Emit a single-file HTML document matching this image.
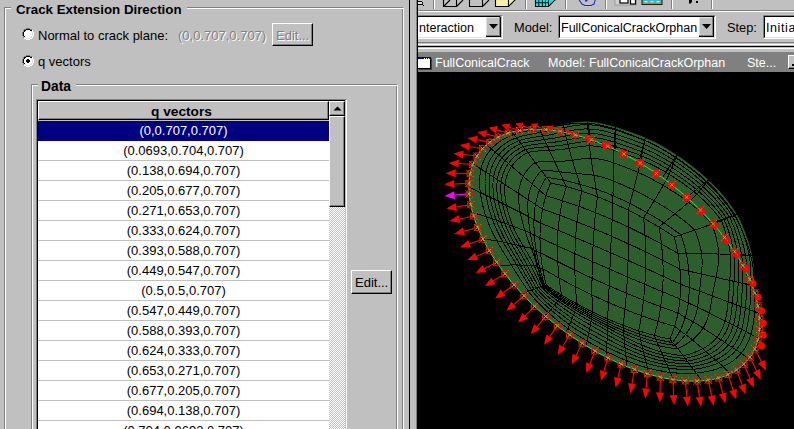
<!DOCTYPE html>
<html><head><meta charset="utf-8">
<style>
*{margin:0;padding:0;box-sizing:border-box}
html,body{width:794px;height:429px;overflow:hidden;background:#c0c0c0;font-family:"Liberation Sans",sans-serif;color:#000}
.a{position:absolute}
.t13{font-size:13px;line-height:15px;white-space:nowrap}
.t12{font-size:12.5px;line-height:15px;white-space:nowrap}
.b{font-weight:bold}
.dis{color:#808080;text-shadow:1px 1px 0 #fff}
.btn{background:#c0c0c0;border-top:1px solid #fff;border-left:1px solid #fff;border-right:1px solid #000;border-bottom:1px solid #000;box-shadow:inset -1px -1px 0 #808080}
.radio{width:12px;height:12px}
.row{position:absolute;left:38px;width:291px;height:20px;background:#fff;border-bottom:1px solid #c0c0c0;text-align:center;font-size:13px;line-height:19px}
</style></head><body>
<!-- LEFT PANEL -->
<div class="a" style="left:4px;top:7px;width:399px;height:500px;border:1px solid #808080"></div>
<div class="a" style="left:5px;top:8px;width:399px;height:500px;border:1px solid #fff"></div>
<div class="a b" style="left:11px;top:2px;padding:0 5px 0 5px;background:#c0c0c0;font-size:13.3px;line-height:15px;white-space:nowrap">Crack Extension Direction</div>

<svg class="a" style="left:22px;top:28px" width="12" height="12" shape-rendering="crispEdges"><rect x="4" y="0" width="1" height="1" fill="#808080"/><rect x="5" y="0" width="1" height="1" fill="#808080"/><rect x="6" y="0" width="1" height="1" fill="#808080"/><rect x="7" y="0" width="1" height="1" fill="#808080"/><rect x="2" y="1" width="1" height="1" fill="#808080"/><rect x="3" y="1" width="1" height="1" fill="#808080"/><rect x="4" y="1" width="1" height="1" fill="#000"/><rect x="5" y="1" width="1" height="1" fill="#000"/><rect x="6" y="1" width="1" height="1" fill="#000"/><rect x="7" y="1" width="1" height="1" fill="#000"/><rect x="8" y="1" width="1" height="1" fill="#808080"/><rect x="9" y="1" width="1" height="1" fill="#808080"/><rect x="1" y="2" width="1" height="1" fill="#808080"/><rect x="2" y="2" width="1" height="1" fill="#000"/><rect x="3" y="2" width="1" height="1" fill="#000"/><rect x="4" y="2" width="1" height="1" fill="#fff"/><rect x="5" y="2" width="1" height="1" fill="#fff"/><rect x="6" y="2" width="1" height="1" fill="#fff"/><rect x="7" y="2" width="1" height="1" fill="#fff"/><rect x="8" y="2" width="1" height="1" fill="#000"/><rect x="9" y="2" width="1" height="1" fill="#000"/><rect x="10" y="2" width="1" height="1" fill="#fff"/><rect x="1" y="3" width="1" height="1" fill="#808080"/><rect x="2" y="3" width="1" height="1" fill="#000"/><rect x="3" y="3" width="1" height="1" fill="#fff"/><rect x="4" y="3" width="1" height="1" fill="#fff"/><rect x="5" y="3" width="1" height="1" fill="#fff"/><rect x="6" y="3" width="1" height="1" fill="#fff"/><rect x="7" y="3" width="1" height="1" fill="#fff"/><rect x="8" y="3" width="1" height="1" fill="#fff"/><rect x="9" y="3" width="1" height="1" fill="#dfdfdf"/><rect x="10" y="3" width="1" height="1" fill="#fff"/><rect x="0" y="4" width="1" height="1" fill="#808080"/><rect x="1" y="4" width="1" height="1" fill="#000"/><rect x="2" y="4" width="1" height="1" fill="#fff"/><rect x="3" y="4" width="1" height="1" fill="#fff"/><rect x="4" y="4" width="1" height="1" fill="#fff"/><rect x="5" y="4" width="1" height="1" fill="#fff"/><rect x="6" y="4" width="1" height="1" fill="#fff"/><rect x="7" y="4" width="1" height="1" fill="#fff"/><rect x="8" y="4" width="1" height="1" fill="#fff"/><rect x="9" y="4" width="1" height="1" fill="#fff"/><rect x="10" y="4" width="1" height="1" fill="#dfdfdf"/><rect x="11" y="4" width="1" height="1" fill="#fff"/><rect x="0" y="5" width="1" height="1" fill="#808080"/><rect x="1" y="5" width="1" height="1" fill="#000"/><rect x="2" y="5" width="1" height="1" fill="#fff"/><rect x="3" y="5" width="1" height="1" fill="#fff"/><rect x="4" y="5" width="1" height="1" fill="#fff"/><rect x="5" y="5" width="1" height="1" fill="#fff"/><rect x="6" y="5" width="1" height="1" fill="#fff"/><rect x="7" y="5" width="1" height="1" fill="#fff"/><rect x="8" y="5" width="1" height="1" fill="#fff"/><rect x="9" y="5" width="1" height="1" fill="#fff"/><rect x="10" y="5" width="1" height="1" fill="#dfdfdf"/><rect x="11" y="5" width="1" height="1" fill="#fff"/><rect x="0" y="6" width="1" height="1" fill="#808080"/><rect x="1" y="6" width="1" height="1" fill="#000"/><rect x="2" y="6" width="1" height="1" fill="#fff"/><rect x="3" y="6" width="1" height="1" fill="#fff"/><rect x="4" y="6" width="1" height="1" fill="#fff"/><rect x="5" y="6" width="1" height="1" fill="#fff"/><rect x="6" y="6" width="1" height="1" fill="#fff"/><rect x="7" y="6" width="1" height="1" fill="#fff"/><rect x="8" y="6" width="1" height="1" fill="#fff"/><rect x="9" y="6" width="1" height="1" fill="#fff"/><rect x="10" y="6" width="1" height="1" fill="#dfdfdf"/><rect x="11" y="6" width="1" height="1" fill="#fff"/><rect x="0" y="7" width="1" height="1" fill="#808080"/><rect x="1" y="7" width="1" height="1" fill="#000"/><rect x="2" y="7" width="1" height="1" fill="#fff"/><rect x="3" y="7" width="1" height="1" fill="#fff"/><rect x="4" y="7" width="1" height="1" fill="#fff"/><rect x="5" y="7" width="1" height="1" fill="#fff"/><rect x="6" y="7" width="1" height="1" fill="#fff"/><rect x="7" y="7" width="1" height="1" fill="#fff"/><rect x="8" y="7" width="1" height="1" fill="#fff"/><rect x="9" y="7" width="1" height="1" fill="#fff"/><rect x="10" y="7" width="1" height="1" fill="#dfdfdf"/><rect x="11" y="7" width="1" height="1" fill="#fff"/><rect x="1" y="8" width="1" height="1" fill="#808080"/><rect x="2" y="8" width="1" height="1" fill="#000"/><rect x="3" y="8" width="1" height="1" fill="#fff"/><rect x="4" y="8" width="1" height="1" fill="#fff"/><rect x="5" y="8" width="1" height="1" fill="#fff"/><rect x="6" y="8" width="1" height="1" fill="#fff"/><rect x="7" y="8" width="1" height="1" fill="#fff"/><rect x="8" y="8" width="1" height="1" fill="#fff"/><rect x="9" y="8" width="1" height="1" fill="#dfdfdf"/><rect x="10" y="8" width="1" height="1" fill="#fff"/><rect x="1" y="9" width="1" height="1" fill="#808080"/><rect x="2" y="9" width="1" height="1" fill="#dfdfdf"/><rect x="3" y="9" width="1" height="1" fill="#dfdfdf"/><rect x="4" y="9" width="1" height="1" fill="#fff"/><rect x="5" y="9" width="1" height="1" fill="#fff"/><rect x="6" y="9" width="1" height="1" fill="#fff"/><rect x="7" y="9" width="1" height="1" fill="#fff"/><rect x="8" y="9" width="1" height="1" fill="#dfdfdf"/><rect x="9" y="9" width="1" height="1" fill="#dfdfdf"/><rect x="10" y="9" width="1" height="1" fill="#fff"/><rect x="2" y="10" width="1" height="1" fill="#fff"/><rect x="3" y="10" width="1" height="1" fill="#fff"/><rect x="4" y="10" width="1" height="1" fill="#dfdfdf"/><rect x="5" y="10" width="1" height="1" fill="#dfdfdf"/><rect x="6" y="10" width="1" height="1" fill="#dfdfdf"/><rect x="7" y="10" width="1" height="1" fill="#dfdfdf"/><rect x="8" y="10" width="1" height="1" fill="#fff"/><rect x="9" y="10" width="1" height="1" fill="#fff"/><rect x="4" y="11" width="1" height="1" fill="#fff"/><rect x="5" y="11" width="1" height="1" fill="#fff"/><rect x="6" y="11" width="1" height="1" fill="#fff"/><rect x="7" y="11" width="1" height="1" fill="#fff"/></svg>
<div class="a t13" style="left:38px;top:28px">Normal to crack plane:</div>
<div class="a t13 dis" style="left:178px;top:28px">(0,0.707,0.707)</div>
<div class="a btn" style="left:272px;top:23px;width:41px;height:23px"></div>
<div class="a t13 dis" style="left:276px;top:28px">Edit...</div>

<svg class="a" style="left:22px;top:55px" width="12" height="12" shape-rendering="crispEdges"><rect x="4" y="0" width="1" height="1" fill="#808080"/><rect x="5" y="0" width="1" height="1" fill="#808080"/><rect x="6" y="0" width="1" height="1" fill="#808080"/><rect x="7" y="0" width="1" height="1" fill="#808080"/><rect x="2" y="1" width="1" height="1" fill="#808080"/><rect x="3" y="1" width="1" height="1" fill="#808080"/><rect x="4" y="1" width="1" height="1" fill="#000"/><rect x="5" y="1" width="1" height="1" fill="#000"/><rect x="6" y="1" width="1" height="1" fill="#000"/><rect x="7" y="1" width="1" height="1" fill="#000"/><rect x="8" y="1" width="1" height="1" fill="#808080"/><rect x="9" y="1" width="1" height="1" fill="#808080"/><rect x="1" y="2" width="1" height="1" fill="#808080"/><rect x="2" y="2" width="1" height="1" fill="#000"/><rect x="3" y="2" width="1" height="1" fill="#000"/><rect x="4" y="2" width="1" height="1" fill="#fff"/><rect x="5" y="2" width="1" height="1" fill="#fff"/><rect x="6" y="2" width="1" height="1" fill="#fff"/><rect x="7" y="2" width="1" height="1" fill="#fff"/><rect x="8" y="2" width="1" height="1" fill="#000"/><rect x="9" y="2" width="1" height="1" fill="#000"/><rect x="10" y="2" width="1" height="1" fill="#fff"/><rect x="1" y="3" width="1" height="1" fill="#808080"/><rect x="2" y="3" width="1" height="1" fill="#000"/><rect x="3" y="3" width="1" height="1" fill="#fff"/><rect x="4" y="3" width="1" height="1" fill="#fff"/><rect x="5" y="3" width="1" height="1" fill="#fff"/><rect x="6" y="3" width="1" height="1" fill="#fff"/><rect x="7" y="3" width="1" height="1" fill="#fff"/><rect x="8" y="3" width="1" height="1" fill="#fff"/><rect x="9" y="3" width="1" height="1" fill="#dfdfdf"/><rect x="10" y="3" width="1" height="1" fill="#fff"/><rect x="0" y="4" width="1" height="1" fill="#808080"/><rect x="1" y="4" width="1" height="1" fill="#000"/><rect x="2" y="4" width="1" height="1" fill="#fff"/><rect x="3" y="4" width="1" height="1" fill="#fff"/><rect x="4" y="4" width="1" height="1" fill="#fff"/><rect x="5" y="4" width="1" height="1" fill="#fff"/><rect x="6" y="4" width="1" height="1" fill="#fff"/><rect x="7" y="4" width="1" height="1" fill="#fff"/><rect x="8" y="4" width="1" height="1" fill="#fff"/><rect x="9" y="4" width="1" height="1" fill="#fff"/><rect x="10" y="4" width="1" height="1" fill="#dfdfdf"/><rect x="11" y="4" width="1" height="1" fill="#fff"/><rect x="0" y="5" width="1" height="1" fill="#808080"/><rect x="1" y="5" width="1" height="1" fill="#000"/><rect x="2" y="5" width="1" height="1" fill="#fff"/><rect x="3" y="5" width="1" height="1" fill="#fff"/><rect x="4" y="5" width="1" height="1" fill="#fff"/><rect x="5" y="5" width="1" height="1" fill="#fff"/><rect x="6" y="5" width="1" height="1" fill="#fff"/><rect x="7" y="5" width="1" height="1" fill="#fff"/><rect x="8" y="5" width="1" height="1" fill="#fff"/><rect x="9" y="5" width="1" height="1" fill="#fff"/><rect x="10" y="5" width="1" height="1" fill="#dfdfdf"/><rect x="11" y="5" width="1" height="1" fill="#fff"/><rect x="0" y="6" width="1" height="1" fill="#808080"/><rect x="1" y="6" width="1" height="1" fill="#000"/><rect x="2" y="6" width="1" height="1" fill="#fff"/><rect x="3" y="6" width="1" height="1" fill="#fff"/><rect x="4" y="6" width="1" height="1" fill="#fff"/><rect x="5" y="6" width="1" height="1" fill="#fff"/><rect x="6" y="6" width="1" height="1" fill="#fff"/><rect x="7" y="6" width="1" height="1" fill="#fff"/><rect x="8" y="6" width="1" height="1" fill="#fff"/><rect x="9" y="6" width="1" height="1" fill="#fff"/><rect x="10" y="6" width="1" height="1" fill="#dfdfdf"/><rect x="11" y="6" width="1" height="1" fill="#fff"/><rect x="0" y="7" width="1" height="1" fill="#808080"/><rect x="1" y="7" width="1" height="1" fill="#000"/><rect x="2" y="7" width="1" height="1" fill="#fff"/><rect x="3" y="7" width="1" height="1" fill="#fff"/><rect x="4" y="7" width="1" height="1" fill="#fff"/><rect x="5" y="7" width="1" height="1" fill="#fff"/><rect x="6" y="7" width="1" height="1" fill="#fff"/><rect x="7" y="7" width="1" height="1" fill="#fff"/><rect x="8" y="7" width="1" height="1" fill="#fff"/><rect x="9" y="7" width="1" height="1" fill="#fff"/><rect x="10" y="7" width="1" height="1" fill="#dfdfdf"/><rect x="11" y="7" width="1" height="1" fill="#fff"/><rect x="1" y="8" width="1" height="1" fill="#808080"/><rect x="2" y="8" width="1" height="1" fill="#000"/><rect x="3" y="8" width="1" height="1" fill="#fff"/><rect x="4" y="8" width="1" height="1" fill="#fff"/><rect x="5" y="8" width="1" height="1" fill="#fff"/><rect x="6" y="8" width="1" height="1" fill="#fff"/><rect x="7" y="8" width="1" height="1" fill="#fff"/><rect x="8" y="8" width="1" height="1" fill="#fff"/><rect x="9" y="8" width="1" height="1" fill="#dfdfdf"/><rect x="10" y="8" width="1" height="1" fill="#fff"/><rect x="1" y="9" width="1" height="1" fill="#808080"/><rect x="2" y="9" width="1" height="1" fill="#dfdfdf"/><rect x="3" y="9" width="1" height="1" fill="#dfdfdf"/><rect x="4" y="9" width="1" height="1" fill="#fff"/><rect x="5" y="9" width="1" height="1" fill="#fff"/><rect x="6" y="9" width="1" height="1" fill="#fff"/><rect x="7" y="9" width="1" height="1" fill="#fff"/><rect x="8" y="9" width="1" height="1" fill="#dfdfdf"/><rect x="9" y="9" width="1" height="1" fill="#dfdfdf"/><rect x="10" y="9" width="1" height="1" fill="#fff"/><rect x="2" y="10" width="1" height="1" fill="#fff"/><rect x="3" y="10" width="1" height="1" fill="#fff"/><rect x="4" y="10" width="1" height="1" fill="#dfdfdf"/><rect x="5" y="10" width="1" height="1" fill="#dfdfdf"/><rect x="6" y="10" width="1" height="1" fill="#dfdfdf"/><rect x="7" y="10" width="1" height="1" fill="#dfdfdf"/><rect x="8" y="10" width="1" height="1" fill="#fff"/><rect x="9" y="10" width="1" height="1" fill="#fff"/><rect x="4" y="11" width="1" height="1" fill="#fff"/><rect x="5" y="11" width="1" height="1" fill="#fff"/><rect x="6" y="11" width="1" height="1" fill="#fff"/><rect x="7" y="11" width="1" height="1" fill="#fff"/><rect x="5" y="4" width="1" height="1" fill="#000"/><rect x="6" y="4" width="1" height="1" fill="#000"/><rect x="4" y="5" width="1" height="1" fill="#000"/><rect x="5" y="5" width="1" height="1" fill="#000"/><rect x="6" y="5" width="1" height="1" fill="#000"/><rect x="7" y="5" width="1" height="1" fill="#000"/><rect x="4" y="6" width="1" height="1" fill="#000"/><rect x="5" y="6" width="1" height="1" fill="#000"/><rect x="6" y="6" width="1" height="1" fill="#000"/><rect x="7" y="6" width="1" height="1" fill="#000"/><rect x="5" y="7" width="1" height="1" fill="#000"/><rect x="6" y="7" width="1" height="1" fill="#000"/></svg>
<div class="a t13" style="left:38px;top:54px">q vectors</div>

<!-- Data group -->
<div class="a" style="left:31px;top:84px;width:366px;height:500px;border:1px solid #808080"></div>
<div class="a" style="left:32px;top:85px;width:366px;height:500px;border:1px solid #fff"></div>
<div class="a b" style="left:38px;top:79px;padding:0 5px 0 3px;background:#c0c0c0;font-size:13.8px;line-height:15px;white-space:nowrap">Data</div>

<!-- table -->
<div class="a" style="left:36px;top:99px;width:311px;height:400px;border-top:1px solid #808080;border-left:1px solid #808080;border-right:1px solid #fff"></div>
<div class="a" style="left:37px;top:100px;width:308px;height:400px;border-top:1px solid #000;border-left:1px solid #000;border-right:1px solid #000;background:#c0c0c0"></div>
<!-- header -->
<div class="a btn" style="left:38px;top:101px;width:291px;height:19px;text-align:center"></div>
<div class="a b" style="left:36px;top:104px;width:291px;text-align:center;font-size:13.7px;line-height:15px;white-space:nowrap">q vectors</div>

<!-- rows -->
<div class="row" style="top:121px;background:#000080;color:#fff;border-bottom:0">(0,0.707,0.707)</div>
<div class="row" style="top:141px">(0.0693,0.704,0.707)</div>
<div class="row" style="top:161px">(0.138,0.694,0.707)</div>
<div class="row" style="top:181px">(0.205,0.677,0.707)</div>
<div class="row" style="top:201px">(0.271,0.653,0.707)</div>
<div class="row" style="top:221px">(0.333,0.624,0.707)</div>
<div class="row" style="top:241px">(0.393,0.588,0.707)</div>
<div class="row" style="top:261px">(0.449,0.547,0.707)</div>
<div class="row" style="top:281px">(0.5,0.5,0.707)</div>
<div class="row" style="top:301px">(0.547,0.449,0.707)</div>
<div class="row" style="top:321px">(0.588,0.393,0.707)</div>
<div class="row" style="top:341px">(0.624,0.333,0.707)</div>
<div class="row" style="top:361px">(0.653,0.271,0.707)</div>
<div class="row" style="top:381px">(0.677,0.205,0.707)</div>
<div class="row" style="top:401px">(0.694,0.138,0.707)</div>
<div class="row" style="top:421px">(0.704,0.0693,0.707)</div>

<!-- scrollbar -->
<div class="a btn" style="left:329px;top:101px;width:16px;height:15px"></div>
<svg class="a" style="left:329px;top:101px" width="16" height="15"><path d="M4.5 9.5H12.5L8.5 5.5Z" fill="#000"/></svg>
<div class="a btn" style="left:329px;top:116px;width:16px;height:91px"></div>
<div class="a" style="left:329px;top:207px;width:16px;height:230px;background-color:#fff;background-image:repeating-conic-gradient(#c0c0c0 0 25%,#fff 0 50%);background-size:2px 2px"></div>

<div class="a btn" style="left:351px;top:270px;width:41px;height:24px"></div>
<div class="a t13" style="left:355px;top:275px">Edit...</div>

<!-- splitter -->
<div class="a" style="left:409px;top:0;width:1px;height:429px;background:#000"></div>
<div class="a" style="left:416px;top:0;width:1px;height:429px;background:#808080"></div>
<div class="a" style="left:417px;top:0;width:1px;height:429px;background:#000"></div>

<!-- RIGHT: toolbars -->
<!-- toolbar row 1 icons -->
<svg class="a" style="left:418px;top:0" width="376" height="10" viewBox="418 0 376 10" shape-rendering="crispEdges">
<path d="M418 1h4v1h-4zM418 4h5v1h-5z" fill="#000"/>
<rect x="418" y="2" width="4" height="2" fill="#dfdfdf"/>
<rect x="422" y="2" width="1" height="3" fill="#000"/><rect x="423" y="5" width="1" height="1" fill="#000"/>
<rect x="433" y="0" width="1" height="9" fill="#808080"/><rect x="434" y="0" width="1" height="9" fill="#fff"/>
<rect x="525" y="0" width="1" height="9" fill="#808080"/><rect x="526" y="0" width="1" height="9" fill="#fff"/>
<rect x="565" y="0" width="1" height="9" fill="#808080"/><rect x="566" y="0" width="1" height="9" fill="#fff"/>
<rect x="605" y="0" width="1" height="9" fill="#808080"/><rect x="606" y="0" width="1" height="9" fill="#fff"/>
<rect x="671" y="0" width="1" height="9" fill="#808080"/><rect x="672" y="0" width="1" height="9" fill="#fff"/>
<rect x="711" y="0" width="1" height="9" fill="#808080"/><rect x="712" y="0" width="1" height="9" fill="#fff"/>
</svg>
<svg class="a" style="left:418px;top:0" width="376" height="10" viewBox="418 0 376 10">
<g fill="none" stroke="#000" stroke-width="1.1">
<path d="M443.5 -1V6.5H456.5V-1M444 6L450 0M456.5 6.5L463 0"/>
<path d="M469.5 -1V6.5H482.5V-1M483 6L489 0"/>
</g>
<path d="M495.5 -1V6.5H508.5L515 0V-1H495.5Z" fill="#f8f0a0" stroke="#000" stroke-width="1.1"/>
<path d="M508.5 -1V6.5" stroke="#000" stroke-width="1.1"/>
<path d="M535.5 -1V6.5H548.5L555 0V-1Z" fill="#00e8f0" stroke="#000" stroke-width="1.1"/>
<path d="M535 2.7H549M538.8 -1V6.5M542.4 -1V6.5M545.5 -1V6.5M548.5 -1V6.5" stroke="#000" stroke-width="0.9"/>
<path d="M578.5 -1L582 4L585 5.5H591L594 4L595.5 -1" fill="none" stroke="#2030d0" stroke-width="1.1"/>
<rect x="585" y="-1" width="2.5" height="2.5" fill="#2030d0"/>
<rect x="615" y="-1" width="21" height="6" fill="#d0d0d0" stroke="#909090" stroke-width="0.8"/>
<rect x="620" y="-1" width="8" height="4" fill="#fff" stroke="#000" stroke-width="1.2"/>
<rect x="630.5" y="-1" width="5" height="5" fill="#fff" stroke="#000" stroke-width="1.2"/>
<rect x="642" y="-1" width="20" height="5.5" fill="#48b0c8" stroke="#302000" stroke-width="1.1"/>
<path d="M644.5 1.8h3M650.5 1.8h3M656.5 1.8h3" stroke="#f0e060" stroke-width="1.4"/>
<path d="M689 0h3v2.5h-1v1h-2z" fill="#000"/><rect x="696" y="1" width="2" height="2" fill="#000"/>
</svg>

<div class="a" style="left:418px;top:10px;width:376px;height:1px;background:#808080"></div>
<div class="a" style="left:418px;top:11px;width:376px;height:1px;background:#fff"></div>
<!-- combo 1 -->
<div class="a" style="left:418px;top:15px;width:85px;height:24px;border-top:1px solid #808080;border-right:1px solid #fff;border-bottom:1px solid #fff"></div>
<div class="a" style="left:418px;top:16px;width:83px;height:22px;border-top:1px solid #000;border-right:1px solid #dfdfdf;border-bottom:1px solid #dfdfdf;background:#fff"></div>
<div class="a t12" style="left:419px;top:21px">nteraction</div>
<div class="a" style="left:486px;top:17px;width:15px;height:20px;background:#c0c0c0;border-right:1px solid #000;border-bottom:1px solid #000;box-shadow:inset -1px -1px 0 #808080,inset 1px 1px 0 #dfdfdf"></div>
<svg class="a" style="left:486px;top:17px" width="15" height="20"><path d="M3 7H12L7.5 12Z" fill="#000"/></svg>
<div class="a t12" style="left:514px;top:20px;font-size:12.8px">Model:</div>
<!-- combo 2 -->
<div class="a" style="left:558px;top:15px;width:158px;height:24px;border:1px solid;border-color:#808080 #fff #fff #808080"></div>
<div class="a" style="left:559px;top:16px;width:156px;height:22px;border:1px solid;border-color:#000 #dfdfdf #dfdfdf #000;background:#fff"></div>
<div class="a t12" style="left:561px;top:21px">FullConicalCrackOrphan</div>
<div class="a" style="left:699px;top:17px;width:15px;height:20px;background:#c0c0c0;border-right:1px solid #000;border-bottom:1px solid #000;box-shadow:inset -1px -1px 0 #808080,inset 1px 1px 0 #dfdfdf"></div>
<svg class="a" style="left:699px;top:17px" width="15" height="20"><path d="M3 7H12L7.5 12Z" fill="#000"/></svg>
<div class="a t12" style="left:727px;top:20px;font-size:12.8px">Step:</div>
<!-- combo 3 -->
<div class="a" style="left:763px;top:15px;width:60px;height:24px;border:1px solid;border-color:#808080 #fff #fff #808080"></div>
<div class="a" style="left:764px;top:16px;width:58px;height:22px;border:1px solid;border-color:#000 #dfdfdf #dfdfdf #000;background:#fff"></div>
<div class="a t12" style="left:766px;top:21px;letter-spacing:0.6px">Initial</div>
<!-- separators -->
<div class="a" style="left:418px;top:42px;width:376px;height:1px;background:#808080"></div>
<div class="a" style="left:418px;top:44px;width:376px;height:1px;background:#fff"></div>
<div class="a" style="left:418px;top:46px;width:376px;height:1px;background:#000"></div>
<div class="a" style="left:418px;top:48px;width:376px;height:1px;background:#fff"></div>
<!-- title bar -->
<div class="a" style="left:418px;top:52px;width:376px;height:20px;background:#808080"></div>
<svg class="a" style="left:418px;top:56px" width="14" height="14" shape-rendering="crispEdges">
<rect x="0" y="1" width="12" height="11" fill="#fff"/>
<rect x="0" y="1" width="12" height="2" fill="#000080"/>
<rect x="6" y="2" width="1" height="1" fill="#fff"/><rect x="8" y="2" width="1" height="1" fill="#fff"/><rect x="10" y="2" width="1" height="1" fill="#fff"/>
<rect x="12" y="1" width="1" height="12" fill="#000"/><rect x="0" y="12" width="13" height="1" fill="#000"/>
<rect x="13" y="2" width="1" height="12" fill="#404040"/><rect x="1" y="13" width="13" height="1" fill="#404040"/>
</svg>
<div class="a t12" style="left:435px;top:56px;color:#fff">FullConicalCrack</div>
<div class="a t12" style="left:548px;top:56px;color:#fff">Model: FullConicalCrackOrphan</div>
<div class="a t12" style="left:747px;top:56px;color:#fff">Ste...</div>
<div class="a btn" style="left:788px;top:55px;width:16px;height:14px"></div>
<div class="a" style="left:792px;top:64px;width:4px;height:2px;background:#000"></div>
<!-- viewport -->
<svg class="a" style="left:418px;top:72px" width="376" height="357" viewBox="418 72 376 357">
<rect x="418" y="72" width="376" height="357" fill="#000"/>
<g id="model"><path d="M490.1 252.0L488.1 248.6L486.2 245.2L484.3 241.6L482.4 237.8L480.6 234.1L478.8 230.2L477.2 226.1L475.6 221.9L474.1 217.7L472.8 213.4L471.7 209.0L470.7 204.4L469.8 199.7L469.3 195.2L468.9 190.5L468.9 185.8L469.1 181.3L469.6 176.7L470.4 172.2L471.6 167.8L473.2 163.5L475.0 159.4L477.2 155.6L479.7 152.0L479.8 151.9L482.7 148.4L485.9 145.3L489.2 142.5L493.0 139.9L496.9 137.6L501.1 135.7L505.4 134.0L509.7 132.6L514.3 131.4L518.8 130.6L523.4 129.9L528.1 129.5L532.8 129.3L537.2 129.1L541.5 128.6L545.4 128.0L549.4 127.3L553.1 126.5L556.8 125.8L560.8 124.9L564.1 124.2L567.9 123.5L571.7 122.8L575.2 122.3L578.8 121.9L582.4 121.7L586.2 121.6L590.0 121.8L593.5 122.1L597.0 122.6L600.6 123.2L604.2 124.0L607.9 124.9L611.1 125.7L614.8 126.8L618.1 127.8L621.3 128.9L624.7 129.9L627.5 130.9L630.9 132.1L633.8 133.2L637.2 134.5L640.1 135.6L643.1 136.8L646.0 138.1L649.0 139.4L652.1 140.8L654.6 142.0L657.6 143.5L660.1 144.8L663.2 146.5L665.7 148.0L668.7 149.8L671.2 151.4L673.8 153.0L676.3 154.7L678.9 156.4L681.4 158.1L686.0 161.4L688.5 163.3L691.1 165.2L693.6 167.2L695.6 168.8L698.2 170.9L700.7 173.1L703.2 175.2L705.2 177.0L707.7 179.3L710.2 181.7L712.2 183.6L714.7 186.1L716.6 188.1L719.0 190.7L721.3 193.3L723.2 195.5L725.5 198.3L727.3 200.6L729.5 203.5L731.7 206.5L733.4 208.9L735.4 212.0L737.3 215.3L738.8 217.8L740.4 221.0L741.8 224.1L743.1 227.2L744.5 230.8L745.9 234.3L747.1 237.7L748.2 241.0L749.2 244.3L750.2 248.0L751.1 251.6L751.9 255.0L752.6 258.4L753.1 262.2L753.6 265.9L753.9 269.8L754.1 273.3L754.3 277.0L754.5 281.0L754.6 284.9L754.7 288.8L755.0 292.5L756.0 297.0L757.2 301.5L758.1 306.0L759.0 310.7L759.5 315.2L759.9 319.9L759.9 324.6L759.7 329.2L759.2 333.7L758.4 338.2L757.2 342.6L755.6 346.9L753.8 351.0L751.6 354.8L749.1 358.5L749.0 358.5L746.1 362.0L743.0 365.1L739.6 367.9L735.8 370.5L731.9 372.8L727.7 374.8L723.4 376.4L719.1 377.8L714.5 379.0L710.0 379.8L705.4 380.5L700.7 380.9L696.0 381.1L691.4 381.1L686.9 381.0L682.5 380.7L678.0 380.2L673.7 379.7L669.5 379.0L665.2 378.2L661.1 377.4L657.3 376.5L653.5 375.5L649.7 374.5L646.0 373.3L642.3 372.2L639.0 371.1L635.6 369.9L632.3 368.7L629.0 367.4L626.0 366.2L623.0 364.9L620.0 363.6L617.1 362.3L614.4 361.1L611.7 359.8L609.0 358.5L606.3 357.1L603.7 355.8L601.2 354.4L598.8 353.2L596.4 351.8L594.1 350.5L591.7 349.2L589.5 347.8L587.2 346.5L585.1 345.2L582.9 343.8L580.9 342.5L578.6 341.1L576.7 339.8L574.7 338.4L572.5 336.9L570.5 335.6L568.6 334.2L566.6 332.8L564.7 331.4L562.7 330.0L560.8 328.5L557.4 325.9L555.5 324.4L553.7 323.0L551.8 321.4L550.0 319.9L548.1 318.4L546.3 316.9L544.3 315.1L542.5 313.5L540.7 312.0L538.7 310.2L537.0 308.6L535.1 306.8L533.4 305.2L531.5 303.3L529.6 301.5L527.6 299.5L525.7 297.6L523.8 295.6L521.9 293.6L520.0 291.6L518.2 289.5L516.1 287.2L514.1 284.9L512.1 282.6L510.2 280.3L508.3 278.0L506.3 275.4L504.2 272.7L502.2 270.0L500.2 267.3L498.2 264.4L496.1 261.5L494.2 258.5L492.1 255.3Z" fill="#2c5f2b"/>
<path d="M513.9 134.5L516.2 133.8L518.6 133.1L520.9 132.5L523.2 131.9L525.5 131.4L527.8 130.9L530.0 130.5L532.3 130.1L534.5 129.8L536.7 129.4L538.9 129.1L541.0 128.7L543.1 128.4L545.3 128.0L547.4 127.7L549.4 127.3L551.5 126.9L553.6 126.6L555.6 126.2L557.7 125.8L559.8 125.5L561.9 125.1L563.9 124.8L566.0 124.5L568.2 124.2L570.3 123.9L572.4 123.7L574.6 123.5L576.8 123.3L579.1 123.2L581.3 123.1L583.6 123.1L585.9 123.2L588.2 123.3L590.6 123.5L593.0 123.8L595.4 124.1L597.8 124.6L600.3 125.1L602.8 125.6L605.2 126.3L607.7 126.9L610.2 127.6L612.8 128.4L615.3 129.2L617.8 130.0L620.4 130.9L622.9 131.7L625.5 132.7L628.1 133.6L630.7 134.6L633.3 135.6L635.9 136.6L638.6 137.7L641.3 138.8L643.9 140.0L646.6 141.2L649.3 142.4L652.0 143.7L654.7 145.1L657.5 146.5L660.2 148.0L662.9 149.6L665.6 151.2L668.4 152.9L671.1 154.7L673.8 156.5L676.6 158.3L679.3 160.2L682.1 162.2L684.8 164.2L687.6 166.2L690.3 168.4L693.1 170.6L695.8 172.8L698.5 175.1L701.3 177.5L704.0 179.9L706.7 182.4L709.4 185.0L712.1 187.7L714.7 190.4L717.3 193.3L719.9 196.2L722.4 199.2L724.9 202.2L727.4 205.4L729.8 208.7L732.1 212.0L734.3 215.5L736.4 218.9L738.2 222.4L739.8 225.7L741.4 229.0L742.8 232.2L744.0 235.4L745.3 238.5L746.4 241.5L747.4 244.4L748.4 247.3L749.3 250.2L750.1 252.9L750.8 255.7L751.4 258.3L751.9 260.9L752.4 263.5L752.8 266.0L753.2 268.5L753.5 270.9L753.7 273.3L753.9 275.6L754.1 277.9L754.3 280.1L754.4 282.3L754.5 284.5L754.7 286.6L754.7 288.8L754.8 290.9L754.9 292.9L754.9 295.0L754.9 297.0L755.0 299.0L754.9 300.9L754.9 302.9L754.9 304.8L754.8 306.7L754.7 308.6L754.6 310.5L754.5 312.4L754.3 314.2L754.1 316.1L754.0 317.9L753.7 319.7L753.5 321.5L753.3 323.2L753.0 325.0L752.7 326.7L752.3 328.5L752.0 330.2L751.5 331.8L751.1 333.5L750.6 335.2L750.1 336.8L749.5 338.4L748.9 340.0L748.3 341.5L747.6 343.0L746.9 344.5L746.1 346.0L745.2 347.5L744.4 348.9L743.4 350.2L742.4 351.6L741.4 352.9L740.3 354.2L739.2 355.4L738.0 356.6L736.7 357.8L735.4 358.9L734.1 360.0L732.7 361.0L731.3 362.0L729.8 363.0L728.2 363.9L726.6 364.8L724.9 365.7L723.2 366.5L721.5 367.2L719.7 367.9L717.8 368.6L715.9 369.3L714.0 369.9L711.9 370.4L709.9 370.9L707.8 371.4L705.6 371.8L703.3 372.2L701.0 372.6L698.7 372.9L696.3 373.1L693.8 373.3L691.4 373.4L689.0 373.5L686.6 373.5L684.3 373.4L682.0 373.4L679.7 373.3L677.5 373.1L675.3 372.9L673.1 372.7L670.9 372.5L668.8 372.2L666.7 371.9L664.6 371.6L662.5 371.2L660.4 370.8L658.4 370.4L656.3 370.0L654.3 369.5L652.3 369.1L650.3 368.6L648.4 368.1L646.4 367.5L644.5 367.0L642.6 366.4L640.7 365.8L638.8 365.2L636.9 364.5L635.0 363.9L633.2 363.2L631.3 362.5L629.5 361.8L627.7 361.1L625.8 360.4L624.0 359.6L622.2 358.9L620.5 358.1L618.7 357.3L616.9 356.5L615.2 355.7L613.4 354.9L611.7 354.1L609.9 353.3L608.2 352.4L606.4 351.6L604.7 350.7L603.0 349.8L601.3 348.9L599.6 348.0L597.9 347.1L596.1 346.2L594.4 345.2L592.7 344.3L591.0 343.3L589.3 342.4L587.6 341.4L585.9 340.4L584.2 339.3L582.5 338.3L580.7 337.2L579.0 336.2L577.3 335.1L575.6 333.9L573.8 332.8L572.1 331.6L570.4 330.4L568.7 329.2L567.0 327.9L565.3 326.6L563.5 325.3L561.8 323.9L560.1 322.5L558.4 321.1L556.7 319.7L554.9 318.2L553.2 316.7L551.4 315.2L549.7 313.7L547.9 312.1L546.1 310.5L544.3 308.8L542.5 307.1L540.7 305.4L538.9 303.6L537.1 301.7L535.3 299.8L533.6 297.8L531.9 295.7L530.2 293.6L528.6 291.4L527.0 289.1L525.4 286.9L524.0 284.8L522.6 282.6L521.2 280.5L519.8 278.5L518.5 276.4L517.2 274.4L516.0 272.4L514.7 270.5L513.5 268.5L512.3 266.6L511.1 264.7L510.0 262.8L508.8 260.9L507.6 259.0L506.5 257.1L505.3 255.2L504.2 253.4L503.0 251.5L501.9 249.6L500.8 247.8L499.7 245.9L498.6 244.0L497.5 242.1L496.5 240.3L495.5 238.4L494.5 236.5L493.6 234.6L492.6 232.8L491.7 230.9L490.9 229.0L490.0 227.1L489.3 225.2L488.5 223.3L487.8 221.5L487.1 219.6L486.4 217.7L485.8 215.8L485.1 213.9L484.6 212.1L484.0 210.2L483.5 208.3L483.0 206.4L482.6 204.5L482.1 202.7L481.7 200.8L481.3 198.9L481.0 197.0L480.7 195.1L480.4 193.2L480.2 191.4L480.0 189.5L479.8 187.6L479.7 185.8L479.7 183.9L479.6 182.1L479.6 180.2L479.7 178.4L479.8 176.6L480.0 174.8L480.3 173.0L480.5 171.2L480.9 169.5L481.3 167.8L481.8 166.1L482.3 164.4L482.9 162.7L483.6 161.1L484.3 159.5L485.1 157.9L485.9 156.3L486.8 154.8L487.8 153.3L488.9 151.9L490.0 150.4L491.2 149.0L492.5 147.7L493.8 146.4L495.3 145.1L496.8 143.8L498.3 142.6L500.0 141.4L501.7 140.3L503.5 139.2L505.4 138.2L507.4 137.2L509.5 136.3L511.6 135.4Z M516.4 137.8L518.7 137.0L520.9 136.4L523.1 135.8L525.4 135.3L527.6 134.8L529.8 134.4L531.9 134.0L534.1 133.6L536.2 133.2L538.4 132.8L540.5 132.5L542.5 132.1L544.6 131.7L546.6 131.4L548.6 131.0L550.6 130.6L552.6 130.1L554.6 129.7L556.5 129.3L558.5 128.8L560.5 128.4L562.5 127.9L564.5 127.5L566.5 127.1L568.5 126.7L570.6 126.3L572.7 125.9L574.8 125.6L576.9 125.3L579.1 125.1L581.3 124.9L583.5 124.8L585.8 124.7L588.1 124.8L590.4 124.9L592.8 125.1L595.2 125.3L597.6 125.7L600.1 126.1L602.5 126.6L605.0 127.2L607.5 127.8L610.0 128.5L612.5 129.2L615.1 130.0L617.6 130.7L620.2 131.5L622.8 132.4L625.4 133.3L628.0 134.2L630.6 135.1L633.3 136.1L635.9 137.1L638.6 138.1L641.3 139.2L644.0 140.3L646.8 141.4L649.5 142.7L652.3 143.9L655.0 145.3L657.8 146.7L660.6 148.2L663.4 149.7L666.1 151.3L668.9 153.0L671.7 154.7L674.5 156.5L677.2 158.4L680.0 160.3L682.8 162.2L685.6 164.2L688.4 166.3L691.2 168.4L693.9 170.6L696.7 172.8L699.5 175.1L702.3 177.5L705.0 179.9L707.7 182.4L710.5 185.0L713.1 187.7L715.8 190.4L718.4 193.2L720.9 196.1L723.5 199.1L725.9 202.2L728.3 205.3L730.7 208.6L733.0 211.9L735.1 215.4L737.0 218.8L738.6 222.3L740.1 225.7L741.4 229.0L742.6 232.2L743.8 235.4L744.8 238.4L745.7 241.4L746.6 244.4L747.4 247.3L748.1 250.1L748.7 252.8L749.2 255.5L749.7 258.2L750.0 260.7L750.3 263.3L750.5 265.7L750.7 268.1L750.8 270.5L750.9 272.8L750.9 275.1L751.0 277.3L751.0 279.5L751.0 281.6L750.9 283.7L750.9 285.8L750.9 287.8L750.8 289.8L750.8 291.8L750.7 293.8L750.6 295.7L750.5 297.6L750.4 299.5L750.3 301.4L750.2 303.3L750.0 305.1L749.9 306.9L749.7 308.7L749.5 310.5L749.3 312.3L749.1 314.0L748.9 315.8L748.7 317.5L748.4 319.2L748.1 320.9L747.9 322.6L747.5 324.3L747.2 326.0L746.8 327.6L746.4 329.2L746.0 330.9L745.5 332.4L745.0 334.0L744.4 335.6L743.8 337.1L743.2 338.6L742.5 340.1L741.8 341.5L741.0 342.9L740.2 344.3L739.4 345.7L738.5 347.0L737.5 348.3L736.5 349.6L735.4 350.8L734.3 352.0L733.2 353.1L732.0 354.3L730.7 355.3L729.4 356.4L728.1 357.4L726.7 358.4L725.3 359.3L723.8 360.2L722.2 361.0L720.6 361.9L719.0 362.6L717.3 363.4L715.6 364.1L713.8 364.8L712.0 365.4L710.1 366.0L708.2 366.5L706.3 367.0L704.3 367.5L702.2 367.9L700.1 368.3L697.9 368.7L695.7 369.0L693.4 369.2L691.0 369.4L688.7 369.4L686.4 369.4L684.1 369.4L681.9 369.3L679.7 369.2L677.5 369.1L675.3 368.9L673.2 368.7L671.0 368.4L668.9 368.2L666.9 367.9L664.8 367.5L662.8 367.2L660.8 366.8L658.8 366.4L656.8 365.9L654.8 365.5L652.9 365.0L651.0 364.5L649.1 364.0L647.2 363.5L645.3 362.9L643.4 362.3L641.6 361.7L639.7 361.1L637.9 360.5L636.1 359.8L634.3 359.1L632.5 358.4L630.7 357.7L628.9 357.0L627.1 356.3L625.4 355.6L623.6 354.8L621.9 354.0L620.2 353.3L618.5 352.5L616.8 351.7L615.1 350.9L613.4 350.1L611.7 349.3L610.0 348.5L608.4 347.6L606.7 346.8L605.0 345.9L603.4 345.1L601.7 344.2L600.1 343.3L598.4 342.4L596.8 341.5L595.1 340.6L593.5 339.7L591.8 338.7L590.2 337.8L588.5 336.9L586.9 335.9L585.2 334.9L583.6 334.0L581.9 333.0L580.3 331.9L578.6 330.9L576.9 329.9L575.3 328.8L573.6 327.7L572.0 326.5L570.3 325.4L568.7 324.2L567.0 323.0L565.3 321.7L563.7 320.4L562.0 319.2L560.4 317.8L558.7 316.5L557.0 315.1L555.4 313.7L553.7 312.3L552.0 310.9L550.3 309.4L548.5 307.9L546.8 306.4L545.1 304.8L543.3 303.2L541.6 301.5L539.9 299.8L538.2 298.0L536.6 296.1L534.9 294.2L533.4 292.2L531.8 290.1L530.4 288.0L529.1 285.9L527.8 283.8L526.6 281.8L525.4 279.8L524.2 277.8L523.1 275.9L521.9 273.9L520.8 272.1L519.7 270.2L518.6 268.3L517.6 266.5L516.5 264.7L515.4 262.9L514.4 261.1L513.3 259.3L512.2 257.5L511.2 255.7L510.1 253.9L509.0 252.2L507.9 250.4L506.9 248.6L505.8 246.8L504.7 245.0L503.7 243.3L502.7 241.5L501.7 239.7L500.7 237.9L499.8 236.1L498.9 234.3L498.0 232.5L497.1 230.7L496.3 228.9L495.5 227.0L494.7 225.2L494.0 223.4L493.2 221.6L492.6 219.8L491.9 218.0L491.3 216.2L490.7 214.3L490.1 212.5L489.6 210.7L489.0 208.9L488.5 207.0L488.1 205.2L487.6 203.4L487.2 201.5L486.9 199.7L486.5 197.9L486.2 196.0L485.9 194.2L485.7 192.4L485.4 190.5L485.3 188.7L485.1 186.9L485.1 185.1L485.0 183.3L485.0 181.5L485.1 179.7L485.2 177.9L485.3 176.2L485.6 174.4L485.8 172.7L486.2 171.0L486.6 169.3L487.0 167.6L487.6 166.0L488.1 164.4L488.8 162.8L489.5 161.2L490.3 159.7L491.1 158.1L492.0 156.7L493.0 155.2L494.0 153.8L495.1 152.4L496.3 151.1L497.6 149.7L498.9 148.4L500.3 147.2L501.8 146.0L503.3 144.8L504.9 143.7L506.6 142.6L508.4 141.5L510.3 140.5L512.2 139.6L514.3 138.6Z M518.7 140.7L520.9 140.1L523.0 139.5L525.2 138.9L527.4 138.5L529.6 138.1L531.7 137.7L533.8 137.3L535.9 137.0L538.0 136.7L540.1 136.4L542.1 136.1L544.2 135.7L546.2 135.4L548.1 135.1L550.1 134.8L552.0 134.4L554.0 134.0L555.9 133.6L557.8 133.2L559.7 132.8L561.7 132.4L563.6 132.0L565.5 131.6L567.5 131.2L569.5 130.8L571.5 130.5L573.5 130.1L575.5 129.8L577.6 129.5L579.7 129.3L581.9 129.1L584.0 129.0L586.2 128.9L588.5 129.0L590.8 129.1L593.1 129.2L595.4 129.5L597.8 129.8L600.2 130.3L602.6 130.8L605.0 131.3L607.4 131.9L609.9 132.6L612.4 133.3L614.9 134.0L617.4 134.8L619.9 135.6L622.4 136.4L625.0 137.3L627.5 138.2L630.1 139.1L632.7 140.0L635.3 141.0L638.0 142.0L640.6 143.0L643.3 144.1L645.9 145.3L648.6 146.4L651.3 147.7L654.1 149.0L656.8 150.4L659.5 151.8L662.2 153.3L664.9 154.9L667.7 156.5L670.4 158.2L673.1 159.9L675.8 161.7L678.6 163.5L681.3 165.4L684.0 167.3L686.7 169.3L689.5 171.3L692.2 173.4L694.9 175.6L697.6 177.8L700.3 180.1L703.0 182.4L705.7 184.8L708.3 187.3L710.9 189.9L713.5 192.5L716.1 195.2L718.5 198.0L721.0 200.9L723.4 203.8L725.8 206.8L728.1 209.9L730.2 213.1L732.3 216.4L734.1 219.8L735.6 223.1L737.0 226.4L738.2 229.6L739.4 232.7L740.4 235.8L741.4 238.8L742.2 241.7L743.0 244.5L743.8 247.3L744.4 250.1L745.0 252.7L745.4 255.4L745.8 257.9L746.2 260.4L746.4 262.9L746.6 265.3L746.7 267.6L746.8 269.9L746.8 272.2L746.8 274.4L746.8 276.5L746.8 278.7L746.8 280.7L746.7 282.8L746.7 284.8L746.6 286.8L746.6 288.8L746.5 290.7L746.4 292.6L746.3 294.5L746.2 296.4L746.1 298.2L746.0 300.0L745.9 301.8L745.7 303.6L745.6 305.4L745.4 307.1L745.2 308.9L745.1 310.6L744.9 312.3L744.7 314.0L744.4 315.7L744.2 317.4L743.9 319.1L743.6 320.7L743.3 322.4L743.0 324.0L742.6 325.6L742.2 327.2L741.8 328.8L741.4 330.3L740.9 331.8L740.3 333.4L739.8 334.8L739.1 336.3L738.5 337.8L737.8 339.2L737.0 340.6L736.3 341.9L735.4 343.2L734.5 344.5L733.6 345.8L732.6 347.0L731.6 348.2L730.6 349.4L729.4 350.5L728.3 351.6L727.1 352.7L725.8 353.7L724.5 354.7L723.2 355.6L721.8 356.6L720.4 357.4L718.9 358.3L717.3 359.1L715.8 359.9L714.2 360.6L712.5 361.3L710.8 361.9L709.1 362.6L707.3 363.1L705.5 363.7L703.6 364.2L701.7 364.7L699.7 365.1L697.7 365.5L695.6 365.9L693.5 366.2L691.3 366.5L689.0 366.6L686.7 366.6L684.5 366.6L682.3 366.5L680.1 366.4L677.9 366.2L675.8 366.0L673.7 365.8L671.6 365.5L669.5 365.2L667.5 364.9L665.5 364.6L663.5 364.2L661.5 363.8L659.5 363.4L657.6 362.9L655.6 362.5L653.7 362.0L651.8 361.5L650.0 360.9L648.1 360.4L646.2 359.8L644.4 359.2L642.6 358.6L640.8 358.0L639.0 357.3L637.2 356.7L635.4 356.0L633.7 355.3L631.9 354.6L630.2 353.9L628.4 353.1L626.7 352.4L625.0 351.6L623.3 350.8L621.7 350.1L620.0 349.3L618.3 348.5L616.7 347.7L615.0 346.9L613.4 346.1L611.7 345.3L610.1 344.4L608.5 343.6L606.9 342.8L605.3 341.9L603.7 341.0L602.1 340.2L600.5 339.3L598.9 338.4L597.3 337.5L595.7 336.6L594.1 335.7L592.5 334.8L590.9 333.9L589.3 333.0L587.7 332.1L586.1 331.2L584.5 330.2L582.9 329.3L581.3 328.3L579.7 327.3L578.0 326.3L576.4 325.3L574.8 324.2L573.2 323.2L571.6 322.1L570.0 321.0L568.4 319.8L566.8 318.6L565.2 317.5L563.6 316.2L562.0 315.0L560.4 313.8L558.7 312.5L557.1 311.2L555.5 309.9L553.8 308.6L552.1 307.2L550.4 305.8L548.8 304.4L547.1 302.9L545.4 301.4L543.7 299.9L542.0 298.2L540.4 296.6L538.8 294.8L537.2 293.0L535.7 291.1L534.2 289.2L532.9 287.2L531.7 285.2L530.5 283.2L529.4 281.3L528.3 279.3L527.2 277.5L526.1 275.6L525.1 273.8L524.1 271.9L523.0 270.1L522.0 268.4L521.0 266.6L520.1 264.8L519.1 263.1L518.1 261.4L517.1 259.6L516.0 257.9L515.0 256.2L514.0 254.5L512.9 252.8L511.9 251.1L510.9 249.3L509.8 247.6L508.8 245.9L507.8 244.1L506.8 242.4L505.8 240.7L504.9 238.9L503.9 237.2L503.0 235.4L502.1 233.7L501.3 231.9L500.5 230.1L499.7 228.4L498.9 226.6L498.1 224.8L497.4 223.1L496.7 221.3L496.1 219.5L495.5 217.7L494.8 216.0L494.3 214.2L493.7 212.4L493.2 210.6L492.7 208.8L492.2 207.0L491.8 205.2L491.3 203.4L491.0 201.7L490.6 199.9L490.3 198.1L490.0 196.3L489.7 194.5L489.5 192.7L489.3 190.9L489.2 189.1L489.0 187.3L489.0 185.6L489.0 183.8L489.0 182.0L489.1 180.3L489.2 178.6L489.4 176.9L489.7 175.2L490.0 173.5L490.3 171.8L490.8 170.2L491.2 168.6L491.8 167.0L492.4 165.4L493.1 163.9L493.8 162.4L494.6 160.9L495.5 159.4L496.4 158.0L497.4 156.6L498.4 155.2L499.5 153.9L500.7 152.6L502.0 151.3L503.3 150.1L504.7 148.9L506.2 147.7L507.7 146.6L509.4 145.5L511.1 144.5L512.8 143.5L514.7 142.5L516.6 141.6Z M520.9 143.7L523.0 143.1L525.2 142.5L527.3 142.1L529.4 141.7L531.5 141.3L533.6 141.0L535.7 140.7L537.8 140.4L539.8 140.1L541.8 139.9L543.8 139.6L545.8 139.4L547.8 139.1L549.7 138.8L551.6 138.5L553.5 138.2L555.4 137.9L557.2 137.6L559.1 137.2L561.0 136.8L562.8 136.5L564.7 136.1L566.6 135.7L568.5 135.3L570.4 135.0L572.4 134.6L574.3 134.3L576.3 134.0L578.3 133.7L580.4 133.5L582.4 133.3L584.5 133.2L586.7 133.2L588.9 133.2L591.1 133.3L593.3 133.4L595.6 133.7L597.9 134.0L600.3 134.4L602.6 134.9L605.0 135.4L607.4 136.0L609.8 136.7L612.2 137.4L614.6 138.1L617.1 138.8L619.6 139.6L622.0 140.4L624.5 141.3L627.1 142.2L629.6 143.1L632.1 144.0L634.7 144.9L637.3 145.9L639.9 146.9L642.5 148.0L645.1 149.1L647.8 150.2L650.4 151.4L653.1 152.7L655.7 154.0L658.4 155.4L661.1 156.9L663.7 158.4L666.4 160.0L669.1 161.6L671.8 163.3L674.4 165.0L677.1 166.7L679.8 168.6L682.4 170.4L685.1 172.3L687.8 174.3L690.4 176.3L693.1 178.4L695.8 180.5L698.4 182.7L701.0 185.0L703.6 187.3L706.2 189.6L708.7 192.1L711.3 194.6L713.7 197.2L716.2 199.9L718.5 202.6L720.9 205.4L723.2 208.3L725.4 211.3L727.5 214.3L729.6 217.5L731.2 220.7L732.6 224.0L733.9 227.1L735.1 230.2L736.1 233.2L737.1 236.2L737.9 239.1L738.7 241.9L739.5 244.7L740.1 247.4L740.7 250.1L741.2 252.7L741.6 255.2L742.0 257.7L742.3 260.1L742.5 262.5L742.6 264.9L742.7 267.1L742.7 269.4L742.7 271.6L742.7 273.7L742.7 275.8L742.6 277.9L742.6 279.9L742.5 281.9L742.4 283.8L742.4 285.8L742.3 287.7L742.2 289.6L742.1 291.4L742.0 293.2L741.9 295.1L741.8 296.9L741.7 298.6L741.5 300.4L741.4 302.1L741.3 303.9L741.1 305.6L741.0 307.3L740.8 309.0L740.6 310.6L740.4 312.3L740.2 314.0L739.9 315.6L739.7 317.2L739.4 318.8L739.1 320.4L738.8 322.0L738.5 323.6L738.1 325.1L737.7 326.7L737.2 328.2L736.7 329.7L736.2 331.2L735.7 332.6L735.1 334.0L734.5 335.4L733.8 336.8L733.1 338.2L732.3 339.5L731.5 340.8L730.6 342.1L729.7 343.3L728.8 344.5L727.8 345.7L726.8 346.8L725.7 347.9L724.6 349.0L723.4 350.0L722.2 351.0L721.0 352.0L719.7 352.9L718.3 353.8L716.9 354.7L715.5 355.5L714.1 356.3L712.5 357.1L711.0 357.8L709.4 358.5L707.8 359.1L706.1 359.7L704.4 360.3L702.7 360.9L700.9 361.4L699.1 361.9L697.2 362.3L695.3 362.8L693.3 363.1L691.3 363.5L689.3 363.8L687.0 363.8L684.8 363.8L682.6 363.7L680.4 363.5L678.3 363.4L676.2 363.2L674.1 362.9L672.1 362.7L670.0 362.4L668.0 362.0L666.0 361.7L664.0 361.3L662.1 360.9L660.2 360.4L658.2 360.0L656.3 359.5L654.5 359.0L652.6 358.5L650.8 357.9L648.9 357.4L647.1 356.8L645.3 356.2L643.5 355.6L641.7 354.9L640.0 354.3L638.2 353.6L636.5 352.9L634.8 352.2L633.1 351.5L631.4 350.7L629.7 350.0L628.0 349.2L626.3 348.4L624.7 347.7L623.0 346.9L621.4 346.1L619.8 345.3L618.2 344.5L616.6 343.7L615.0 342.9L613.4 342.1L611.8 341.2L610.2 340.4L608.6 339.6L607.1 338.7L605.5 337.9L604.0 337.0L602.4 336.2L600.9 335.3L599.3 334.4L597.8 333.6L596.2 332.7L594.7 331.8L593.1 330.9L591.6 330.0L590.0 329.2L588.5 328.3L586.9 327.4L585.4 326.5L583.8 325.6L582.3 324.7L580.7 323.7L579.2 322.8L577.6 321.8L576.0 320.8L574.5 319.8L572.9 318.8L571.4 317.7L569.8 316.7L568.3 315.6L566.7 314.5L565.2 313.3L563.6 312.2L562.0 311.1L560.4 309.9L558.8 308.7L557.2 307.5L555.6 306.2L554.0 305.0L552.4 303.7L550.7 302.4L549.1 301.0L547.4 299.6L545.8 298.2L544.2 296.7L542.6 295.1L541.0 293.5L539.5 291.9L538.0 290.1L536.5 288.3L535.3 286.4L534.2 284.5L533.2 282.6L532.2 280.8L531.2 278.9L530.2 277.1L529.2 275.3L528.3 273.6L527.3 271.8L526.4 270.1L525.4 268.4L524.5 266.7L523.6 265.0L522.7 263.3L521.7 261.7L520.8 260.0L519.8 258.3L518.9 256.7L517.9 255.0L516.9 253.4L515.9 251.7L514.9 250.0L513.9 248.4L512.9 246.7L511.9 245.0L510.9 243.3L510.0 241.7L509.0 240.0L508.1 238.3L507.2 236.6L506.3 234.8L505.5 233.1L504.7 231.4L503.9 229.7L503.1 228.0L502.3 226.2L501.6 224.5L500.9 222.8L500.3 221.1L499.6 219.3L499.0 217.6L498.4 215.8L497.9 214.1L497.3 212.4L496.8 210.6L496.3 208.9L495.9 207.1L495.5 205.4L495.1 203.6L494.7 201.8L494.4 200.1L494.1 198.3L493.8 196.6L493.5 194.8L493.3 193.1L493.2 191.3L493.0 189.6L493.0 187.8L492.9 186.1L492.9 184.4L493.0 182.7L493.1 181.0L493.3 179.3L493.5 177.6L493.8 176.0L494.1 174.4L494.5 172.8L494.9 171.2L495.4 169.6L496.0 168.1L496.6 166.5L497.3 165.1L498.1 163.6L498.9 162.2L499.8 160.8L500.7 159.4L501.7 158.0L502.8 156.7L503.9 155.4L505.1 154.2L506.4 153.0L507.7 151.8L509.1 150.6L510.5 149.5L512.1 148.4L513.7 147.4L515.4 146.4L517.1 145.4L519.0 144.5Z M523.2 146.6L525.2 146.1L527.3 145.6L529.4 145.2L531.5 144.9L533.5 144.6L535.6 144.3L537.6 144.0L539.6 143.8L541.6 143.6L543.6 143.4L545.5 143.2L547.5 143.0L549.4 142.8L551.2 142.6L553.1 142.3L554.9 142.1L556.8 141.8L558.6 141.5L560.4 141.2L562.2 140.9L564.0 140.5L565.9 140.2L567.7 139.8L569.5 139.5L571.4 139.2L573.2 138.8L575.1 138.5L577.1 138.2L579.0 138.0L581.0 137.8L583.0 137.6L585.1 137.5L587.1 137.4L589.3 137.4L591.4 137.5L593.6 137.6L595.8 137.9L598.1 138.2L600.4 138.6L602.7 139.0L605.0 139.6L607.3 140.1L609.7 140.8L612.0 141.4L614.4 142.2L616.8 142.9L619.2 143.7L621.7 144.5L624.1 145.3L626.6 146.2L629.1 147.0L631.5 147.9L634.1 148.9L636.6 149.8L639.2 150.8L641.7 151.8L644.3 152.9L646.9 154.0L649.5 155.2L652.1 156.4L654.7 157.7L657.3 159.1L660.0 160.5L662.6 161.9L665.2 163.5L667.8 165.0L670.4 166.6L673.0 168.3L675.7 170.0L678.3 171.7L680.9 173.5L683.5 175.4L686.1 177.3L688.7 179.2L691.3 181.2L693.9 183.2L696.5 185.3L699.0 187.5L701.6 189.7L704.1 192.0L706.6 194.3L709.0 196.8L711.4 199.2L713.8 201.8L716.1 204.4L718.4 207.1L720.6 209.8L722.8 212.7L724.8 215.6L726.8 218.6L728.3 221.7L729.6 224.8L730.8 227.8L731.9 230.8L732.8 233.8L733.7 236.6L734.5 239.4L735.2 242.2L735.9 244.9L736.5 247.5L737.0 250.1L737.5 252.6L737.9 255.1L738.2 257.5L738.4 259.9L738.5 262.2L738.6 264.4L738.7 266.7L738.7 268.8L738.7 270.9L738.6 273.0L738.5 275.1L738.5 277.1L738.4 279.0L738.3 281.0L738.2 282.9L738.1 284.7L738.0 286.6L737.9 288.4L737.8 290.2L737.7 292.0L737.6 293.8L737.5 295.5L737.4 297.2L737.2 299.0L737.1 300.6L737.0 302.3L736.8 304.0L736.7 305.7L736.5 307.3L736.3 308.9L736.1 310.6L735.9 312.2L735.7 313.8L735.5 315.4L735.2 316.9L734.9 318.5L734.6 320.0L734.3 321.6L733.9 323.1L733.5 324.6L733.1 326.1L732.6 327.5L732.1 329.0L731.6 330.4L731.0 331.8L730.4 333.1L729.8 334.5L729.1 335.8L728.3 337.1L727.6 338.4L726.7 339.6L725.9 340.8L725.0 342.0L724.0 343.1L723.0 344.2L722.0 345.3L720.9 346.4L719.8 347.4L718.6 348.3L717.4 349.3L716.1 350.2L714.9 351.1L713.5 351.9L712.2 352.7L710.8 353.5L709.3 354.3L707.8 355.0L706.3 355.7L704.8 356.3L703.2 356.9L701.6 357.5L699.9 358.1L698.2 358.6L696.5 359.1L694.7 359.5L692.9 360.0L691.0 360.4L689.1 360.7L687.2 361.1L685.0 361.0L682.9 360.9L680.7 360.8L678.6 360.6L676.5 360.4L674.5 360.1L672.4 359.9L670.4 359.5L668.5 359.2L666.5 358.8L664.5 358.4L662.6 358.0L660.7 357.5L658.8 357.1L657.0 356.6L655.1 356.1L653.3 355.5L651.5 355.0L649.7 354.4L647.9 353.8L646.1 353.2L644.4 352.5L642.6 351.9L640.9 351.2L639.2 350.5L637.5 349.8L635.8 349.1L634.1 348.4L632.5 347.6L630.8 346.8L629.2 346.1L627.5 345.3L625.9 344.5L624.3 343.7L622.7 342.9L621.1 342.1L619.6 341.3L618.0 340.5L616.4 339.7L614.9 338.9L613.4 338.0L611.8 337.2L610.3 336.4L608.8 335.6L607.3 334.7L605.7 333.9L604.2 333.0L602.7 332.2L601.2 331.3L599.7 330.4L598.3 329.6L596.8 328.7L595.3 327.9L593.8 327.0L592.3 326.2L590.8 325.3L589.3 324.4L587.8 323.6L586.3 322.7L584.8 321.9L583.3 321.0L581.8 320.1L580.3 319.2L578.8 318.3L577.3 317.4L575.7 316.4L574.2 315.5L572.7 314.5L571.2 313.5L569.7 312.5L568.2 311.5L566.7 310.4L565.2 309.4L563.7 308.3L562.1 307.3L560.6 306.2L559.0 305.1L557.5 303.9L555.9 302.8L554.3 301.6L552.7 300.4L551.1 299.2L549.5 297.9L547.9 296.5L546.3 295.2L544.7 293.7L543.2 292.2L541.7 290.7L540.3 289.1L538.8 287.4L537.8 285.6L536.8 283.8L535.9 282.0L534.9 280.3L534.0 278.5L533.2 276.8L532.3 275.1L531.4 273.4L530.5 271.7L529.7 270.1L528.8 268.4L528.0 266.8L527.1 265.2L526.3 263.5L525.4 261.9L524.5 260.3L523.6 258.7L522.7 257.1L521.8 255.6L520.8 254.0L519.9 252.4L518.9 250.8L517.9 249.1L517.0 247.5L516.0 245.9L515.0 244.3L514.1 242.6L513.2 241.0L512.3 239.3L511.4 237.7L510.5 236.0L509.7 234.4L508.8 232.7L508.0 231.0L507.3 229.3L506.5 227.7L505.8 226.0L505.1 224.3L504.4 222.6L503.8 220.9L503.2 219.2L502.6 217.5L502.0 215.8L501.5 214.1L501.0 212.4L500.5 210.7L500.0 209.0L499.6 207.3L499.2 205.5L498.8 203.8L498.4 202.1L498.1 200.4L497.8 198.7L497.6 197.0L497.4 195.2L497.2 193.5L497.0 191.8L496.9 190.1L496.9 188.4L496.9 186.7L496.9 185.1L497.0 183.4L497.1 181.7L497.3 180.1L497.6 178.5L497.9 176.9L498.2 175.3L498.6 173.8L499.1 172.2L499.6 170.7L500.2 169.2L500.9 167.8L501.6 166.3L502.3 164.9L503.1 163.5L504.0 162.2L505.0 160.8L506.0 159.5L507.1 158.3L508.2 157.0L509.4 155.8L510.6 154.7L512.0 153.5L513.4 152.4L514.8 151.4L516.3 150.3L517.9 149.3L519.6 148.4L521.3 147.5Z M525.4 149.5L527.4 149.1L529.5 148.7L531.5 148.4L533.5 148.1L535.5 147.8L537.5 147.6L539.5 147.4L541.5 147.2L543.4 147.1L545.3 146.9L547.2 146.8L549.1 146.7L551.0 146.5L552.8 146.3L554.6 146.1L556.4 145.9L558.2 145.7L560.0 145.4L561.7 145.2L563.5 144.9L565.2 144.6L567.0 144.3L568.8 144.0L570.5 143.7L572.3 143.4L574.1 143.1L576.0 142.8L577.8 142.5L579.7 142.2L581.6 142.0L583.6 141.8L585.6 141.7L587.6 141.6L589.6 141.6L591.7 141.7L593.9 141.8L596.0 142.1L598.2 142.4L600.4 142.7L602.7 143.2L605.0 143.7L607.2 144.2L609.5 144.9L611.9 145.5L614.2 146.2L616.5 147.0L618.9 147.7L621.3 148.5L623.7 149.3L626.1 150.2L628.5 151.0L631.0 151.9L633.4 152.8L635.9 153.7L638.4 154.7L641.0 155.7L643.5 156.7L646.0 157.8L648.6 158.9L651.2 160.1L653.7 161.4L656.3 162.7L658.9 164.1L661.4 165.5L664.0 167.0L666.5 168.5L669.1 170.0L671.7 171.6L674.2 173.3L676.8 175.0L679.3 176.7L681.9 178.4L684.4 180.3L687.0 182.1L689.5 184.0L692.1 186.0L694.6 188.0L697.1 190.0L699.5 192.2L702.0 194.3L704.4 196.6L706.8 198.9L709.1 201.3L711.4 203.7L713.6 206.2L715.9 208.7L718.0 211.3L720.1 214.0L722.1 216.8L724.0 219.6L725.4 222.7L726.7 225.6L727.7 228.6L728.7 231.5L729.6 234.3L730.4 237.0L731.1 239.8L731.7 242.4L732.3 245.0L732.9 247.6L733.3 250.1L733.7 252.5L734.1 254.9L734.3 257.3L734.5 259.6L734.6 261.8L734.7 264.0L734.7 266.2L734.6 268.3L734.6 270.3L734.5 272.3L734.4 274.3L734.3 276.3L734.2 278.2L734.1 280.0L734.0 281.9L733.8 283.7L733.7 285.5L733.6 287.3L733.5 289.0L733.4 290.8L733.3 292.5L733.2 294.2L733.0 295.9L732.9 297.5L732.8 299.2L732.6 300.8L732.5 302.4L732.4 304.0L732.2 305.6L732.0 307.2L731.9 308.8L731.7 310.4L731.5 311.9L731.2 313.5L731.0 315.0L730.7 316.5L730.4 318.1L730.1 319.5L729.8 321.0L729.4 322.5L729.0 323.9L728.5 325.3L728.0 326.8L727.5 328.1L727.0 329.5L726.4 330.8L725.8 332.1L725.1 333.4L724.4 334.7L723.6 335.9L722.8 337.1L722.0 338.3L721.1 339.4L720.2 340.6L719.2 341.6L718.2 342.7L717.2 343.7L716.1 344.7L715.0 345.7L713.8 346.6L712.6 347.5L711.4 348.3L710.1 349.2L708.8 350.0L707.5 350.7L706.1 351.5L704.7 352.2L703.2 352.8L701.7 353.5L700.2 354.1L698.7 354.7L697.1 355.3L695.5 355.8L693.9 356.3L692.2 356.8L690.5 357.2L688.7 357.6L687.0 358.0L685.1 358.3L683.0 358.2L680.9 358.1L678.8 357.9L676.8 357.7L674.8 357.4L672.7 357.1L670.8 356.8L668.8 356.4L666.9 356.0L665.0 355.6L663.1 355.2L661.2 354.7L659.4 354.2L657.5 353.7L655.7 353.2L653.9 352.6L652.1 352.0L650.4 351.4L648.6 350.8L646.9 350.2L645.1 349.6L643.4 348.9L641.7 348.2L640.1 347.5L638.4 346.8L636.7 346.1L635.1 345.3L633.5 344.5L631.9 343.8L630.3 343.0L628.7 342.2L627.1 341.4L625.5 340.6L624.0 339.8L622.4 338.9L620.9 338.1L619.4 337.3L617.8 336.5L616.3 335.7L614.8 334.9L613.3 334.1L611.9 333.3L610.4 332.4L608.9 331.6L607.4 330.8L606.0 330.0L604.5 329.2L603.1 328.3L601.6 327.5L600.1 326.7L598.7 325.9L597.2 325.1L595.8 324.2L594.3 323.4L592.9 322.6L591.4 321.8L590.0 321.0L588.5 320.2L587.0 319.4L585.6 318.6L584.1 317.7L582.7 316.9L581.2 316.0L579.7 315.2L578.3 314.3L576.8 313.4L575.3 312.5L573.9 311.6L572.4 310.6L571.0 309.7L569.5 308.8L568.1 307.8L566.6 306.8L565.1 305.8L563.6 304.8L562.1 303.8L560.6 302.8L559.1 301.7L557.6 300.7L556.1 299.6L554.5 298.5L553.0 297.3L551.4 296.2L549.9 294.9L548.4 293.7L546.9 292.3L545.4 291.0L544.0 289.6L542.5 288.1L541.1 286.6L540.2 284.8L539.4 283.1L538.5 281.4L537.7 279.7L536.9 278.1L536.1 276.4L535.3 274.8L534.5 273.2L533.8 271.6L533.0 270.0L532.2 268.4L531.4 266.9L530.6 265.3L529.8 263.8L529.0 262.2L528.2 260.7L527.4 259.1L526.5 257.6L525.6 256.1L524.7 254.5L523.8 253.0L522.9 251.5L522.0 249.9L521.0 248.3L520.1 246.8L519.2 245.2L518.2 243.6L517.3 242.0L516.4 240.4L515.6 238.8L514.7 237.2L513.9 235.6L513.0 234.0L512.2 232.3L511.5 230.7L510.7 229.1L510.0 227.4L509.3 225.8L508.6 224.1L508.0 222.5L507.3 220.8L506.7 219.2L506.2 217.5L505.6 215.8L505.1 214.2L504.6 212.5L504.1 210.8L503.7 209.2L503.3 207.5L502.9 205.8L502.5 204.1L502.2 202.4L501.9 200.8L501.6 199.1L501.4 197.4L501.2 195.7L501.0 194.1L500.9 192.4L500.8 190.7L500.8 189.1L500.8 187.4L500.9 185.8L501.0 184.2L501.1 182.6L501.3 181.0L501.6 179.4L501.9 177.9L502.3 176.4L502.7 174.8L503.2 173.4L503.8 171.9L504.4 170.5L505.0 169.0L505.8 167.7L506.5 166.3L507.4 165.0L508.3 163.7L509.2 162.4L510.2 161.1L511.3 159.9L512.4 158.7L513.6 157.6L514.8 156.4L516.2 155.4L517.5 154.3L519.0 153.3L520.5 152.3L522.1 151.3L523.7 150.4Z M527.7 152.5L529.6 152.1L531.6 151.8L533.6 151.5L535.6 151.3L537.5 151.1L539.5 150.9L541.4 150.8L543.3 150.7L545.2 150.6L547.1 150.5L548.9 150.4L550.8 150.3L552.6 150.2L554.4 150.1L556.1 149.9L557.9 149.8L559.6 149.6L561.3 149.4L563.0 149.2L564.7 149.0L566.4 148.7L568.1 148.4L569.9 148.2L571.6 147.9L573.3 147.6L575.1 147.3L576.8 147.0L578.6 146.8L580.4 146.5L582.3 146.3L584.2 146.1L586.1 146.0L588.0 145.9L590.0 145.9L592.1 145.9L594.1 146.1L596.2 146.3L598.4 146.5L600.5 146.9L602.7 147.3L604.9 147.8L607.2 148.4L609.4 149.0L611.7 149.6L614.0 150.3L616.3 151.0L618.6 151.8L620.9 152.5L623.2 153.3L625.6 154.2L628.0 155.0L630.4 155.8L632.8 156.7L635.3 157.6L637.7 158.5L640.2 159.5L642.7 160.5L645.2 161.6L647.7 162.7L650.2 163.8L652.7 165.1L655.2 166.3L657.8 167.7L660.3 169.0L662.8 170.5L665.3 171.9L667.8 173.4L670.3 175.0L672.8 176.6L675.3 178.2L677.8 179.8L680.3 181.5L682.8 183.3L685.3 185.0L687.8 186.9L690.2 188.7L692.7 190.7L695.1 192.6L697.5 194.6L699.9 196.7L702.2 198.9L704.5 201.1L706.8 203.3L709.0 205.6L711.2 208.0L713.3 210.4L715.5 212.9L717.5 215.4L719.4 218.0L721.3 220.7L722.6 223.6L723.7 226.5L724.6 229.3L725.5 232.1L726.3 234.8L727.0 237.5L727.7 240.1L728.2 242.7L728.8 245.2L729.3 247.6L729.7 250.1L730.0 252.4L730.3 254.8L730.5 257.0L730.6 259.3L730.7 261.4L730.7 263.6L730.7 265.7L730.6 267.7L730.5 269.7L730.4 271.7L730.3 273.6L730.1 275.5L730.0 277.3L729.9 279.1L729.7 280.9L729.6 282.7L729.5 284.4L729.3 286.1L729.2 287.8L729.1 289.5L729.0 291.2L728.8 292.8L728.7 294.5L728.6 296.1L728.5 297.7L728.3 299.3L728.2 300.8L728.1 302.4L727.9 304.0L727.8 305.5L727.6 307.1L727.4 308.6L727.2 310.1L727.0 311.6L726.8 313.1L726.5 314.6L726.2 316.1L725.9 317.5L725.6 319.0L725.2 320.4L724.8 321.8L724.4 323.2L723.9 324.5L723.5 325.9L722.9 327.2L722.3 328.5L721.7 329.8L721.1 331.0L720.4 332.3L719.7 333.5L718.9 334.6L718.1 335.8L717.3 336.9L716.4 338.0L715.5 339.1L714.5 340.1L713.5 341.1L712.5 342.0L711.4 343.0L710.3 343.9L709.1 344.8L707.9 345.6L706.7 346.4L705.5 347.2L704.2 347.9L702.9 348.7L701.5 349.4L700.1 350.0L698.7 350.7L697.3 351.3L695.8 351.9L694.3 352.4L692.8 353.0L691.3 353.5L689.7 354.0L688.1 354.4L686.5 354.8L684.8 355.2L683.1 355.6L681.0 355.5L679.0 355.3L676.9 355.0L674.9 354.7L673.0 354.4L671.0 354.1L669.1 353.7L667.2 353.3L665.3 352.9L663.4 352.4L661.6 351.9L659.8 351.4L658.0 350.9L656.2 350.3L654.4 349.8L652.7 349.2L650.9 348.6L649.2 347.9L647.5 347.3L645.8 346.6L644.2 345.9L642.5 345.3L640.9 344.6L639.2 343.8L637.6 343.1L636.0 342.4L634.4 341.6L632.9 340.9L631.3 340.1L629.7 339.4L628.2 338.6L626.7 337.9L625.2 337.1L623.7 336.3L622.2 335.5L620.7 334.8L619.2 334.0L617.7 333.2L616.2 332.5L614.8 331.7L613.3 330.9L611.9 330.2L610.4 329.4L609.0 328.6L607.5 327.9L606.1 327.1L604.6 326.3L603.2 325.5L601.8 324.7L600.3 323.9L598.9 323.1L597.5 322.3L596.1 321.6L594.6 320.8L593.2 320.0L591.7 319.2L590.3 318.4L588.9 317.6L587.4 316.8L586.0 316.0L584.6 315.2L583.1 314.4L581.7 313.6L580.2 312.8L578.8 312.0L577.4 311.1L575.9 310.2L574.5 309.4L573.1 308.5L571.7 307.6L570.2 306.7L568.8 305.8L567.3 304.9L565.9 304.0L564.5 303.1L563.0 302.1L561.5 301.1L560.1 300.2L558.6 299.2L557.1 298.1L555.6 297.1L554.1 296.0L552.6 294.9L551.2 293.8L549.7 292.6L548.3 291.4L546.9 290.1L545.5 288.8L544.1 287.4L542.7 286.0L542.0 284.3L541.3 282.7L540.7 281.0L540.0 279.4L539.3 277.8L538.7 276.2L538.1 274.6L537.4 273.1L536.8 271.5L536.1 270.0L535.5 268.5L534.8 267.0L534.1 265.5L533.4 264.0L532.7 262.5L531.9 261.0L531.1 259.5L530.3 258.1L529.5 256.6L528.6 255.1L527.8 253.6L526.9 252.1L526.0 250.7L525.1 249.1L524.2 247.6L523.3 246.1L522.4 244.6L521.5 243.0L520.6 241.5L519.7 239.9L518.9 238.4L518.0 236.8L517.2 235.2L516.4 233.7L515.7 232.1L514.9 230.5L514.2 228.9L513.5 227.3L512.8 225.7L512.2 224.1L511.5 222.4L510.9 220.8L510.3 219.2L509.8 217.6L509.2 215.9L508.7 214.3L508.3 212.7L507.8 211.1L507.4 209.4L507.0 207.8L506.6 206.1L506.3 204.5L506.0 202.9L505.7 201.2L505.4 199.6L505.2 197.9L505.0 196.3L504.9 194.7L504.8 193.0L504.7 191.4L504.7 189.8L504.7 188.2L504.8 186.6L505.0 185.1L505.1 183.5L505.4 182.0L505.7 180.4L506.0 178.9L506.4 177.5L506.8 176.0L507.4 174.6L507.9 173.2L508.5 171.8L509.2 170.4L509.9 169.1L510.7 167.8L511.5 166.5L512.4 165.2L513.4 164.0L514.4 162.8L515.4 161.6L516.6 160.5L517.7 159.4L519.0 158.3L520.3 157.2L521.6 156.2L523.0 155.2L524.5 154.3L526.1 153.4Z M535.2 162.3L537.0 162.1L538.7 161.9L540.5 161.8L542.2 161.7L544.0 161.6L545.7 161.5L547.4 161.5L549.1 161.5L550.8 161.5L552.5 161.5L554.2 161.5L555.8 161.4L557.5 161.4L559.1 161.4L560.7 161.3L562.3 161.3L563.8 161.2L565.4 161.0L566.9 160.9L568.5 160.7L570.0 160.5L571.6 160.3L573.1 160.1L574.7 159.9L576.2 159.7L577.8 159.4L579.4 159.2L581.0 159.0L582.7 158.8L584.4 158.6L586.1 158.5L587.9 158.3L589.6 158.3L591.5 158.3L593.3 158.3L595.2 158.5L597.1 158.7L599.1 159.0L601.1 159.3L603.1 159.8L605.2 160.3L607.2 160.8L609.3 161.4L611.4 162.1L613.5 162.8L615.6 163.6L617.7 164.3L619.8 165.1L622.0 165.9L624.1 166.8L626.3 167.6L628.5 168.5L630.7 169.4L632.9 170.3L635.1 171.2L637.3 172.1L639.6 173.1L641.8 174.1L644.1 175.1L646.3 176.2L648.6 177.4L650.8 178.5L653.1 179.7L655.3 181.0L657.6 182.2L659.8 183.5L662.1 184.8L664.3 186.1L666.6 187.5L668.9 188.9L671.1 190.3L673.4 191.7L675.7 193.2L677.9 194.7L680.2 196.2L682.5 197.7L684.7 199.3L687.0 201.0L689.2 202.7L691.4 204.4L693.6 206.2L695.7 208.0L697.8 209.9L699.9 211.8L702.0 213.7L704.0 215.7L706.0 217.8L708.0 219.9L709.8 222.0L711.6 224.3L712.7 226.8L713.6 229.2L714.4 231.7L715.2 234.1L715.8 236.5L716.4 238.9L716.9 241.2L717.3 243.5L717.7 245.7L718.1 247.9L718.3 250.1L718.5 252.2L718.7 254.3L718.7 256.4L718.7 258.4L718.6 260.3L718.5 262.3L718.3 264.1L718.0 266.0L717.8 267.8L717.5 269.5L717.1 271.2L716.8 272.9L716.5 274.5L716.2 276.1L715.8 277.7L715.5 279.3L715.2 280.8L714.9 282.3L714.6 283.8L714.3 285.3L714.0 286.7L713.7 288.1L713.5 289.5L713.2 290.9L712.9 292.3L712.7 293.7L712.5 295.1L712.2 296.5L712.0 297.8L711.8 299.2L711.6 300.5L711.4 301.9L711.2 303.2L710.9 304.5L710.7 305.9L710.5 307.2L710.2 308.5L710.0 309.8L709.7 311.1L709.4 312.4L709.1 313.6L708.8 314.9L708.4 316.2L708.0 317.4L707.6 318.6L707.2 319.8L706.7 321.0L706.2 322.2L705.7 323.3L705.1 324.4L704.5 325.5L703.9 326.6L703.3 327.7L702.6 328.8L701.9 329.8L701.2 330.8L700.5 331.8L699.7 332.7L698.9 333.7L698.0 334.6L697.2 335.5L696.3 336.4L695.4 337.3L694.5 338.1L693.5 338.9L692.5 339.7L691.5 340.5L690.5 341.3L689.5 342.1L688.4 342.8L687.3 343.5L686.2 344.2L685.1 344.9L683.9 345.6L682.8 346.3L681.6 346.9L680.3 347.5L679.1 348.1L677.8 348.7L676.0 348.6L674.2 348.4L672.4 348.2L670.7 348.0L668.9 347.7L667.2 347.4L665.5 347.1L663.8 346.8L662.1 346.4L660.5 346.1L658.8 345.7L657.2 345.3L655.6 344.9L653.9 344.5L652.3 344.0L650.8 343.6L649.2 343.1L647.6 342.6L646.0 342.1L644.5 341.6L642.9 341.1L641.4 340.5L639.9 340.0L638.3 339.4L636.8 338.8L635.3 338.2L633.8 337.6L632.3 337.0L630.8 336.4L629.3 335.7L627.8 335.1L626.3 334.5L624.9 333.8L623.4 333.1L622.0 332.5L620.5 331.8L619.0 331.1L617.6 330.4L616.2 329.7L614.7 329.1L613.3 328.4L611.8 327.7L610.4 327.0L609.0 326.3L607.6 325.5L606.1 324.8L604.7 324.1L603.3 323.4L601.9 322.6L600.4 321.9L599.0 321.1L597.6 320.4L596.2 319.6L594.7 318.9L593.3 318.1L591.9 317.4L590.5 316.6L589.1 315.8L587.6 315.1L586.2 314.3L584.8 313.5L583.4 312.7L581.9 311.9L580.5 311.1L579.1 310.3L577.7 309.5L576.3 308.7L574.8 307.9L573.4 307.0L572.0 306.2L570.6 305.3L569.2 304.4L567.7 303.6L566.3 302.7L564.9 301.8L563.4 300.9L562.0 299.9L560.6 299.0L559.1 298.0L557.7 297.1L556.2 296.1L554.8 295.1L553.3 294.0L551.9 292.9L550.5 291.8L549.0 290.7L547.6 289.5L546.2 288.3L544.9 287.1L543.5 285.8L542.9 284.2L542.3 282.7L541.8 281.1L541.3 279.6L540.7 278.0L540.3 276.5L539.8 275.0L539.3 273.5L538.9 272.0L538.5 270.5L538.0 269.0L537.6 267.6L537.2 266.1L536.8 264.7L536.4 263.3L536.0 261.9L535.6 260.5L535.2 259.1L534.7 257.7L534.3 256.3L533.8 255.0L533.3 253.6L532.8 252.2L532.3 250.8L531.8 249.5L531.2 248.1L530.7 246.7L530.1 245.4L529.6 244.0L529.1 242.6L528.5 241.2L528.0 239.8L527.5 238.4L527.0 237.1L526.5 235.7L526.0 234.3L525.6 232.9L525.1 231.5L524.7 230.1L524.3 228.7L523.9 227.2L523.5 225.8L523.1 224.4L522.7 223.0L522.3 221.6L522.0 220.1L521.6 218.7L521.3 217.3L521.0 215.8L520.7 214.4L520.4 212.9L520.1 211.5L519.8 210.0L519.6 208.5L519.4 207.1L519.1 205.6L519.0 204.1L518.8 202.6L518.7 201.2L518.6 199.7L518.6 198.2L518.5 196.8L518.5 195.3L518.6 193.9L518.7 192.5L518.8 191.0L519.0 189.6L519.2 188.2L519.5 186.9L519.8 185.5L520.2 184.2L520.5 182.8L521.0 181.5L521.5 180.2L522.0 178.9L522.6 177.7L523.2 176.4L523.8 175.2L524.5 174.0L525.3 172.9L526.0 171.7L526.9 170.6L527.7 169.4L528.7 168.4L529.6 167.3L530.6 166.3L531.7 165.2L532.8 164.2L534.0 163.3Z M541.4 170.6L543.0 170.6L544.7 170.6L546.3 170.6L547.9 170.7L549.5 170.8L551.1 170.9L552.7 171.0L554.3 171.2L555.9 171.3L557.5 171.5L559.0 171.7L560.6 171.9L562.2 172.1L563.7 172.2L565.2 172.4L566.8 172.6L568.3 172.8L569.8 172.9L571.3 173.1L572.8 173.2L574.3 173.4L575.7 173.5L577.2 173.6L578.7 173.7L580.2 173.9L581.7 174.0L583.2 174.1L584.8 174.2L586.3 174.4L587.8 174.5L589.4 174.7L591.0 174.9L592.6 175.1L594.2 175.4L595.9 175.7L597.5 176.0L599.2 176.4L600.9 176.8L602.6 177.3L604.4 177.8L606.1 178.3L607.9 178.9L609.6 179.6L611.4 180.2L613.2 180.9L614.9 181.7L616.7 182.4L618.5 183.1L620.3 183.9L622.1 184.7L623.9 185.5L625.7 186.3L627.5 187.1L629.3 187.9L631.2 188.7L633.0 189.6L634.8 190.5L636.7 191.3L638.5 192.3L640.3 193.2L642.2 194.1L644.0 195.1L645.8 196.1L647.7 197.1L649.5 198.1L651.3 199.2L653.2 200.2L655.0 201.3L656.9 202.4L658.7 203.5L660.6 204.6L662.4 205.7L664.3 206.8L666.1 208.0L668.0 209.2L669.8 210.4L671.7 211.6L673.5 212.9L675.3 214.1L677.2 215.4L679.0 216.8L680.8 218.1L682.6 219.5L684.4 220.9L686.1 222.4L687.9 223.8L689.7 225.3L691.4 226.9L693.1 228.4L694.7 230.0L695.5 232.0L696.3 233.9L697.0 235.8L697.7 237.7L698.3 239.6L698.8 241.4L699.3 243.3L699.8 245.1L700.2 246.9L700.6 248.7L701.0 250.5L701.3 252.3L701.5 254.0L701.7 255.7L701.9 257.4L702.0 259.1L702.1 260.7L702.1 262.3L702.1 263.9L702.0 265.5L702.0 267.0L701.9 268.6L701.8 270.1L701.7 271.5L701.5 273.0L701.4 274.4L701.3 275.8L701.1 277.2L701.0 278.6L700.8 280.0L700.7 281.3L700.5 282.7L700.4 284.0L700.2 285.3L700.1 286.6L699.9 287.9L699.8 289.2L699.6 290.5L699.5 291.7L699.3 293.0L699.2 294.3L699.0 295.5L698.9 296.8L698.8 298.0L698.6 299.3L698.5 300.5L698.3 301.8L698.1 303.0L698.0 304.2L697.8 305.5L697.6 306.7L697.3 307.9L697.1 309.1L696.9 310.3L696.6 311.5L696.3 312.6L696.0 313.8L695.7 314.9L695.3 316.1L694.9 317.2L694.5 318.3L694.1 319.4L693.7 320.5L693.3 321.6L692.8 322.7L692.3 323.7L691.8 324.7L691.3 325.8L690.7 326.8L690.1 327.8L689.5 328.8L688.9 329.8L688.3 330.7L687.7 331.7L687.0 332.6L686.3 333.5L685.6 334.5L684.9 335.4L684.2 336.3L683.4 337.1L682.7 338.0L681.9 338.9L681.1 339.7L680.3 340.6L679.4 341.4L678.6 342.2L677.7 343.0L676.8 343.8L675.9 344.5L674.9 345.3L673.3 345.1L671.7 344.9L670.0 344.7L668.4 344.4L666.8 344.2L665.2 343.9L663.6 343.6L662.1 343.3L660.5 342.9L658.9 342.6L657.4 342.2L655.8 341.8L654.3 341.4L652.8 341.0L651.3 340.6L649.7 340.2L648.2 339.7L646.7 339.3L645.2 338.8L643.7 338.3L642.2 337.9L640.8 337.3L639.3 336.8L637.8 336.3L636.3 335.8L634.9 335.2L633.4 334.7L631.9 334.1L630.5 333.5L629.0 332.9L627.6 332.3L626.1 331.7L624.7 331.1L623.2 330.5L621.8 329.9L620.4 329.3L618.9 328.6L617.5 328.0L616.1 327.4L614.7 326.7L613.2 326.1L611.8 325.4L610.4 324.7L609.0 324.1L607.6 323.4L606.2 322.7L604.7 322.0L603.3 321.3L601.9 320.6L600.5 319.9L599.1 319.2L597.7 318.4L596.3 317.7L594.9 317.0L593.5 316.3L592.1 315.5L590.7 314.8L589.3 314.0L587.9 313.3L586.5 312.5L585.0 311.8L583.6 311.0L582.2 310.3L580.8 309.5L579.4 308.7L578.0 307.9L576.6 307.1L575.2 306.3L573.8 305.5L572.4 304.7L571.0 303.9L569.6 303.0L568.2 302.2L566.8 301.4L565.3 300.5L563.9 299.6L562.5 298.8L561.1 297.9L559.6 297.0L558.2 296.0L556.8 295.1L555.3 294.1L553.9 293.2L552.5 292.2L551.1 291.2L549.6 290.1L548.2 289.1L546.8 288.0L545.4 286.9L544.0 285.7L543.4 284.3L542.9 282.8L542.4 281.4L541.9 279.9L541.4 278.5L541.0 277.0L540.5 275.6L540.1 274.2L539.7 272.8L539.3 271.3L538.9 269.9L538.5 268.5L538.1 267.2L537.8 265.8L537.4 264.4L537.1 263.0L536.8 261.7L536.4 260.3L536.1 259.0L535.8 257.6L535.5 256.3L535.1 254.9L534.8 253.6L534.5 252.3L534.2 251.0L533.8 249.6L533.5 248.3L533.2 247.0L532.9 245.7L532.6 244.4L532.3 243.1L532.0 241.8L531.7 240.5L531.4 239.2L531.2 237.9L530.9 236.6L530.7 235.3L530.4 234.0L530.2 232.7L530.0 231.4L529.8 230.1L529.6 228.8L529.4 227.5L529.3 226.2L529.1 224.9L528.9 223.6L528.8 222.3L528.7 221.0L528.5 219.7L528.4 218.4L528.3 217.1L528.2 215.8L528.1 214.4L528.0 213.1L527.9 211.8L527.8 210.5L527.8 209.2L527.8 207.9L527.8 206.6L527.8 205.3L527.8 203.9L527.9 202.6L528.0 201.3L528.1 200.1L528.2 198.8L528.4 197.5L528.6 196.2L528.8 195.0L529.1 193.7L529.3 192.5L529.7 191.3L530.0 190.0L530.4 188.8L530.8 187.7L531.2 186.5L531.7 185.3L532.2 184.2L532.7 183.0L533.2 181.9L533.8 180.8L534.4 179.7L535.1 178.6L535.8 177.6L536.5 176.5L537.2 175.5L538.0 174.5L538.8 173.5L539.6 172.5L540.5 171.5Z M546.5 177.4L548.1 177.6L549.6 177.8L551.1 178.0L552.6 178.2L554.1 178.5L555.6 178.7L557.1 179.0L558.6 179.3L560.0 179.6L561.5 179.9L563.0 180.2L564.5 180.5L566.0 180.8L567.5 181.2L568.9 181.5L570.4 181.9L571.9 182.3L573.3 182.6L574.8 183.0L576.2 183.4L577.7 183.8L579.2 184.2L580.6 184.6L582.0 185.0L583.5 185.4L584.9 185.8L586.4 186.2L587.8 186.6L589.3 187.0L590.8 187.5L592.2 187.9L593.7 188.4L595.1 188.9L596.6 189.3L598.1 189.8L599.5 190.3L601.0 190.9L602.5 191.4L604.0 192.0L605.5 192.5L607.0 193.1L608.5 193.7L610.0 194.3L611.5 195.0L613.0 195.6L614.5 196.3L616.0 197.0L617.5 197.6L619.0 198.3L620.5 199.0L622.0 199.7L623.5 200.4L625.0 201.2L626.5 201.9L628.0 202.6L629.5 203.4L631.0 204.1L632.5 204.9L634.0 205.6L635.5 206.4L637.0 207.2L638.5 208.0L640.0 208.8L641.5 209.6L643.1 210.5L644.6 211.3L646.1 212.1L647.6 213.0L649.1 213.9L650.6 214.7L652.1 215.6L653.6 216.5L655.1 217.4L656.6 218.3L658.2 219.2L659.7 220.2L661.2 221.1L662.7 222.1L664.2 223.1L665.7 224.0L667.2 225.0L668.7 226.1L670.2 227.1L671.7 228.1L673.2 229.2L674.7 230.3L676.2 231.4L677.7 232.5L679.2 233.6L680.7 234.8L681.3 236.3L681.8 237.7L682.3 239.2L682.8 240.7L683.3 242.2L683.7 243.7L684.2 245.1L684.6 246.6L685.0 248.0L685.4 249.5L685.7 250.9L686.0 252.4L686.4 253.8L686.7 255.2L686.9 256.6L687.2 258.0L687.4 259.4L687.6 260.8L687.8 262.2L688.0 263.5L688.1 264.9L688.3 266.2L688.4 267.6L688.5 268.9L688.6 270.2L688.7 271.5L688.8 272.8L688.9 274.1L689.0 275.4L689.0 276.7L689.1 278.0L689.1 279.3L689.2 280.5L689.2 281.8L689.2 283.0L689.2 284.3L689.2 285.5L689.2 286.8L689.2 288.0L689.2 289.2L689.1 290.4L689.1 291.7L689.1 292.9L689.0 294.1L688.9 295.3L688.9 296.5L688.8 297.7L688.7 298.9L688.6 300.1L688.5 301.3L688.3 302.4L688.2 303.6L688.0 304.8L687.8 305.9L687.7 307.1L687.5 308.2L687.2 309.4L687.0 310.5L686.8 311.6L686.5 312.7L686.3 313.8L686.0 314.9L685.7 316.0L685.4 317.1L685.1 318.2L684.7 319.3L684.4 320.3L684.0 321.4L683.6 322.4L683.2 323.5L682.8 324.5L682.4 325.5L682.0 326.5L681.5 327.5L681.1 328.5L680.6 329.5L680.1 330.5L679.6 331.5L679.1 332.4L678.6 333.4L678.0 334.4L677.5 335.3L676.9 336.2L676.3 337.2L675.7 338.1L675.1 339.0L674.5 339.9L673.9 340.8L673.2 341.6L672.5 342.5L671.0 342.3L669.5 342.0L668.0 341.7L666.5 341.4L665.0 341.1L663.5 340.8L662.0 340.5L660.5 340.1L659.0 339.8L657.6 339.4L656.1 339.1L654.6 338.7L653.2 338.3L651.7 337.9L650.2 337.4L648.8 337.0L647.3 336.6L645.9 336.1L644.4 335.7L643.0 335.2L641.5 334.7L640.1 334.3L638.7 333.8L637.2 333.3L635.8 332.8L634.4 332.2L633.0 331.7L631.5 331.2L630.1 330.6L628.7 330.1L627.3 329.5L625.9 329.0L624.4 328.4L623.0 327.8L621.6 327.2L620.2 326.7L618.8 326.1L617.4 325.5L616.0 324.9L614.6 324.2L613.2 323.6L611.8 323.0L610.4 322.4L609.0 321.7L607.6 321.1L606.2 320.4L604.8 319.8L603.4 319.1L602.0 318.5L600.7 317.8L599.3 317.1L597.9 316.4L596.5 315.7L595.1 315.0L593.7 314.3L592.3 313.6L590.9 312.9L589.6 312.2L588.2 311.5L586.8 310.8L585.4 310.0L584.0 309.3L582.6 308.6L581.2 307.8L579.9 307.1L578.5 306.3L577.1 305.6L575.7 304.8L574.3 304.0L572.9 303.2L571.5 302.4L570.1 301.6L568.7 300.8L567.3 300.0L566.0 299.2L564.6 298.3L563.2 297.5L561.8 296.7L560.4 295.8L559.0 294.9L557.6 294.0L556.2 293.1L554.7 292.2L553.3 291.3L551.9 290.4L550.5 289.4L549.1 288.5L547.7 287.5L546.3 286.5L544.9 285.5L544.4 284.1L544.0 282.7L543.5 281.4L543.1 280.0L542.7 278.7L542.3 277.3L541.9 276.0L541.5 274.6L541.1 273.3L540.8 272.0L540.4 270.6L540.1 269.3L539.8 268.0L539.4 266.7L539.1 265.4L538.8 264.1L538.6 262.7L538.3 261.4L538.0 260.1L537.7 258.8L537.5 257.6L537.2 256.3L537.0 255.0L536.8 253.7L536.5 252.4L536.3 251.1L536.1 249.9L535.9 248.6L535.7 247.3L535.5 246.1L535.4 244.8L535.2 243.6L535.0 242.3L534.9 241.0L534.8 239.8L534.6 238.6L534.5 237.3L534.4 236.1L534.3 234.8L534.2 233.6L534.1 232.4L534.1 231.1L534.0 229.9L534.0 228.7L534.0 227.5L533.9 226.2L533.9 225.0L533.9 223.8L533.9 222.6L533.9 221.4L534.0 220.2L534.0 219.0L534.1 217.8L534.1 216.6L534.2 215.4L534.3 214.2L534.4 213.0L534.5 211.8L534.6 210.7L534.7 209.5L534.9 208.3L535.0 207.2L535.2 206.0L535.4 204.8L535.6 203.7L535.9 202.5L536.1 201.4L536.4 200.3L536.6 199.1L536.9 198.0L537.2 196.9L537.6 195.8L537.9 194.7L538.3 193.6L538.6 192.5L539.0 191.5L539.5 190.4L539.9 189.4L540.3 188.3L540.8 187.3L541.3 186.2L541.8 185.2L542.3 184.2L542.9 183.2L543.4 182.2L544.0 181.2L544.6 180.3L545.2 179.3L545.9 178.4Z M550.8 183.0L553.3 183.5L555.8 184.1L558.4 184.6L560.9 185.2L563.5 185.9L566.0 186.5L568.5 187.2L571.1 187.9L573.6 188.7L576.2 189.4L578.7 190.2L581.2 191.0L583.8 191.8L586.3 192.7L588.8 193.6L591.3 194.5L593.9 195.4L596.4 196.4L598.9 197.3L601.5 198.3L604.0 199.3L606.5 200.4L609.0 201.4L611.5 202.5L614.1 203.6L616.6 204.7L619.1 205.9L621.6 207.1L624.1 208.2L626.7 209.5L629.2 210.7L631.7 211.9L634.2 213.2L636.7 214.5L639.2 215.8L641.7 217.2L644.2 218.6L646.7 220.0L649.2 221.4L651.8 222.8L654.3 224.3L656.8 225.8L659.3 227.3L661.8 228.8L664.3 230.4L666.8 232.0L669.3 233.6L671.8 235.3L674.2 237.0 M545.9 195.7L548.6 196.5L551.3 197.3L554.0 198.1L556.7 198.9L559.4 199.7L562.1 200.6L564.8 201.5L567.5 202.4L570.2 203.3L572.9 204.2L575.6 205.2L578.4 206.1L581.1 207.1L583.8 208.1L586.5 209.1L589.2 210.2L591.9 211.2L594.6 212.3L597.3 213.4L599.9 214.5L602.6 215.6L605.3 216.7L608.0 217.9L610.7 219.0L613.4 220.2L616.1 221.4L618.8 222.6L621.5 223.8L624.2 225.1L626.9 226.3L629.6 227.6L632.3 228.9L634.9 230.2L637.6 231.5L640.3 232.9L643.0 234.2L645.7 235.6L648.4 237.0L651.1 238.4L653.7 239.8L656.4 241.2L659.1 242.7L661.8 244.2L664.5 245.6L667.1 247.2L669.8 248.7L672.5 250.3L675.2 251.8L677.9 253.4 M542.5 209.1L545.4 210.1L548.2 211.1L551.0 212.1L553.8 213.1L556.6 214.1L559.4 215.1L562.2 216.2L565.0 217.2L567.8 218.3L570.7 219.4L573.5 220.5L576.3 221.6L579.1 222.7L581.9 223.8L584.7 225.0L587.5 226.1L590.3 227.2L593.1 228.4L595.9 229.6L598.7 230.8L601.5 231.9L604.3 233.1L607.1 234.3L609.9 235.6L612.7 236.8L615.5 238.0L618.4 239.3L621.2 240.5L624.0 241.8L626.8 243.1L629.6 244.3L632.4 245.6L635.2 246.9L638.0 248.2L640.8 249.6L643.6 250.9L646.4 252.2L649.2 253.6L651.9 254.9L654.7 256.3L657.5 257.7L660.3 259.1L663.1 260.5L665.9 261.9L668.7 263.3L671.5 264.8L674.3 266.2L677.1 267.7L679.9 269.2 M540.6 223.1L543.4 224.3L546.3 225.4L549.2 226.6L552.0 227.8L554.9 229.0L557.7 230.2L560.6 231.4L563.5 232.5L566.3 233.7L569.2 234.9L572.0 236.2L574.9 237.4L577.8 238.6L580.6 239.8L583.5 241.0L586.3 242.2L589.2 243.4L592.0 244.7L594.9 245.9L597.8 247.1L600.6 248.4L603.5 249.6L606.3 250.9L609.2 252.1L612.0 253.3L614.9 254.6L617.8 255.9L620.6 257.1L623.5 258.4L626.3 259.6L629.2 260.9L632.0 262.2L634.9 263.5L637.7 264.7L640.6 266.0L643.5 267.3L646.3 268.6L649.2 269.9L652.0 271.2L654.9 272.5L657.7 273.8L660.6 275.1L663.4 276.4L666.3 277.7L669.1 279.0L672.0 280.3L674.8 281.7L677.7 283.0L680.6 284.3 M539.9 237.7L542.8 239.0L545.7 240.3L548.5 241.7L551.4 243.0L554.2 244.3L557.1 245.6L559.9 246.9L562.8 248.2L565.6 249.5L568.5 250.8L571.3 252.1L574.2 253.4L577.0 254.7L579.9 256.0L582.8 257.3L585.6 258.5L588.5 259.8L591.3 261.1L594.2 262.4L597.0 263.6L599.9 264.9L602.7 266.1L605.6 267.4L608.5 268.7L611.3 269.9L614.2 271.1L617.0 272.4L619.9 273.6L622.7 274.9L625.6 276.1L628.5 277.3L631.3 278.6L634.2 279.8L637.0 281.0L639.9 282.2L642.7 283.4L645.6 284.6L648.5 285.8L651.3 287.1L654.2 288.3L657.0 289.5L659.9 290.6L662.8 291.8L665.6 293.0L668.5 294.2L671.3 295.4L674.2 296.6L677.1 297.7L679.9 298.9 M540.6 252.8L543.4 254.3L546.2 255.8L549.0 257.2L551.8 258.7L554.6 260.1L557.4 261.5L560.2 262.9L563.0 264.3L565.8 265.7L568.6 267.1L571.3 268.4L574.1 269.8L576.9 271.1L579.7 272.4L582.5 273.8L585.3 275.1L588.1 276.4L590.9 277.7L593.7 278.9L596.5 280.2L599.3 281.5L602.1 282.7L605.0 284.0L607.8 285.2L610.6 286.4L613.4 287.7L616.2 288.9L619.0 290.1L621.8 291.2L624.6 292.4L627.4 293.6L630.2 294.8L633.0 295.9L635.8 297.0L638.6 298.2L641.4 299.3L644.2 300.4L647.0 301.5L649.8 302.6L652.7 303.7L655.5 304.8L658.3 305.8L661.1 306.9L663.9 307.9L666.7 308.9L669.5 309.9L672.3 310.9L675.1 311.9L678.0 312.9 M542.6 268.6L545.3 270.2L548.0 271.7L550.7 273.3L553.4 274.8L556.0 276.4L558.7 277.8L561.4 279.3L564.1 280.8L566.8 282.2L569.4 283.6L572.1 285.0L574.8 286.4L577.5 287.8L580.2 289.1L582.9 290.5L585.6 291.8L588.2 293.1L590.9 294.4L593.6 295.7L596.3 296.9L599.0 298.2L601.7 299.4L604.4 300.6L607.1 301.8L609.8 303.0L612.5 304.1L615.2 305.3L617.9 306.4L620.6 307.5L623.2 308.6L625.9 309.7L628.6 310.8L631.3 311.8L634.0 312.9L636.7 313.9L639.4 314.9L642.1 315.9L644.9 316.8L647.6 317.8L650.3 318.7L653.0 319.6L655.7 320.5L658.4 321.4L661.1 322.3L663.8 323.1L666.5 323.9L669.2 324.7L671.9 325.5L674.6 326.3 M546.2 285.0L548.7 286.7L551.2 288.4L553.7 290.0L556.2 291.6L558.7 293.2L561.2 294.7L563.7 296.2L566.2 297.7L568.7 299.2L571.3 300.6L573.8 302.0L576.3 303.4L578.8 304.8L581.3 306.2L583.8 307.5L586.3 308.8L588.8 310.1L591.3 311.3L593.8 312.5L596.4 313.8L598.9 314.9L601.4 316.1L603.9 317.3L606.4 318.4L609.0 319.5L611.5 320.6L614.0 321.6L616.5 322.7L619.0 323.7L621.6 324.7L624.1 325.6L626.6 326.6L629.2 327.5L631.7 328.4L634.2 329.3L636.7 330.2L639.3 331.0L641.8 331.8L644.3 332.6L646.9 333.3L649.4 334.1L652.0 334.8L654.5 335.5L657.0 336.1L659.6 336.8L662.1 337.4L664.7 337.9L667.2 338.5L669.8 339.0 M550.8 183.0L549.9 184.8L549.2 186.6L548.4 188.4L547.8 190.2L547.1 192.0L546.5 193.9L545.9 195.7L545.3 197.6L544.8 199.5L544.3 201.4L543.8 203.3L543.3 205.2L542.9 207.2L542.5 209.1L542.2 211.1L541.8 213.1L541.5 215.0L541.3 217.0L541.0 219.1L540.8 221.1L540.6 223.1L540.4 225.2L540.3 227.2L540.2 229.3L540.1 231.4L540.0 233.5L540.0 235.6L539.9 237.7L540.0 239.8L540.0 242.0L540.1 244.1L540.2 246.3L540.3 248.4L540.4 250.6L540.6 252.8L540.8 255.0L541.0 257.3L541.3 259.5L541.6 261.7L541.9 264.0L542.3 266.3L542.6 268.6L543.1 270.9L543.5 273.2L544.0 275.5L544.5 277.9L545.0 280.2L545.6 282.6L546.2 285.0 M566.3 186.6L565.7 188.6L565.1 190.6L564.5 192.6L564.0 194.6L563.4 196.6L562.9 198.6L562.5 200.7L562.0 202.7L561.6 204.8L561.2 206.9L560.8 209.0L560.4 211.1L560.1 213.2L559.8 215.3L559.5 217.4L559.2 219.5L558.9 221.7L558.7 223.8L558.5 226.0L558.3 228.1L558.1 230.3L557.9 232.5L557.8 234.7L557.7 236.9L557.6 239.1L557.5 241.3L557.5 243.5L557.4 245.8L557.4 248.0L557.4 250.3L557.4 252.5L557.5 254.8L557.5 257.1L557.6 259.4L557.7 261.7L557.8 264.0L558.0 266.3L558.2 268.6L558.3 271.0L558.6 273.3L558.8 275.7L559.0 278.0L559.3 280.4L559.6 282.8L560.0 285.2L560.3 287.6L560.7 290.0L561.1 292.4L561.5 294.9 M581.9 191.2L581.4 193.4L581.0 195.5L580.5 197.7L580.1 199.8L579.8 202.0L579.4 204.2L579.0 206.4L578.7 208.6L578.4 210.8L578.1 213.0L577.8 215.2L577.5 217.4L577.2 219.6L577.0 221.9L576.7 224.1L576.5 226.3L576.3 228.6L576.1 230.9L575.9 233.1L575.8 235.4L575.6 237.7L575.5 239.9L575.3 242.2L575.2 244.5L575.1 246.8L575.0 249.1L575.0 251.4L574.9 253.7L574.9 256.1L574.8 258.4L574.8 260.7L574.8 263.1L574.8 265.4L574.8 267.7L574.8 270.1L574.9 272.5L575.0 274.8L575.0 277.2L575.1 279.6L575.2 282.0L575.3 284.4L575.5 286.8L575.6 289.2L575.8 291.6L576.0 294.0L576.2 296.4L576.4 298.9L576.6 301.3L576.9 303.8 M597.4 196.7L597.1 199.0L596.8 201.3L596.5 203.5L596.3 205.8L596.0 208.1L595.8 210.4L595.6 212.7L595.3 215.0L595.1 217.3L594.9 219.6L594.7 221.9L594.5 224.2L594.3 226.5L594.2 228.8L594.0 231.2L593.8 233.5L593.7 235.8L593.5 238.1L593.4 240.5L593.2 242.8L593.1 245.1L593.0 247.5L592.9 249.8L592.8 252.2L592.7 254.5L592.6 256.9L592.5 259.2L592.4 261.6L592.3 263.9L592.2 266.3L592.2 268.7L592.1 271.0L592.1 273.4L592.0 275.8L592.0 278.1L592.0 280.5L591.9 282.9L591.9 285.3L591.9 287.7L591.9 290.1L591.9 292.5L591.9 294.9L592.0 297.3L592.0 299.7L592.0 302.1L592.1 304.5L592.1 306.9L592.2 309.3L592.3 311.8 M612.8 203.1L612.7 205.4L612.6 207.8L612.5 210.2L612.4 212.5L612.3 214.9L612.2 217.3L612.1 219.6L612.0 222.0L611.9 224.3L611.8 226.7L611.7 229.1L611.6 231.4L611.4 233.8L611.3 236.2L611.2 238.5L611.1 240.9L611.0 243.3L610.9 245.6L610.8 248.0L610.7 250.4L610.6 252.7L610.5 255.1L610.4 257.5L610.3 259.8L610.2 262.2L610.1 264.5L610.0 266.9L609.9 269.3L609.8 271.6L609.7 274.0L609.6 276.4L609.5 278.7L609.4 281.1L609.3 283.5L609.2 285.8L609.1 288.2L608.9 290.6L608.8 292.9L608.7 295.3L608.6 297.7L608.5 300.0L608.4 302.4L608.3 304.7L608.2 307.1L608.1 309.5L608.0 311.8L607.9 314.2L607.8 316.6L607.7 318.9 M628.2 210.2L628.3 212.7L628.4 215.1L628.4 217.5L628.5 219.9L628.5 222.3L628.5 224.7L628.6 227.1L628.6 229.5L628.6 231.9L628.6 234.3L628.6 236.7L628.6 239.1L628.5 241.5L628.5 243.9L628.5 246.2L628.4 248.6L628.4 251.0L628.3 253.3L628.3 255.7L628.2 258.1L628.1 260.4L628.0 262.8L627.9 265.1L627.8 267.5L627.7 269.8L627.6 272.2L627.5 274.5L627.4 276.9L627.3 279.2L627.1 281.5L627.0 283.9L626.8 286.2L626.7 288.5L626.5 290.8L626.3 293.2L626.2 295.5L626.0 297.8L625.8 300.1L625.6 302.4L625.4 304.7L625.2 307.0L624.9 309.3L624.7 311.6L624.5 313.9L624.2 316.2L624.0 318.5L623.7 320.7L623.4 323.0L623.1 325.3 M643.6 218.2L643.9 220.7L644.1 223.1L644.3 225.6L644.5 228.0L644.7 230.4L644.9 232.8L645.0 235.2L645.2 237.6L645.3 240.0L645.4 242.4L645.5 244.8L645.5 247.2L645.6 249.5L645.7 251.9L645.7 254.3L645.7 256.6L645.7 258.9L645.7 261.3L645.7 263.6L645.6 265.9L645.6 268.3L645.5 270.6L645.5 272.9L645.4 275.2L645.3 277.5L645.2 279.8L645.0 282.1L644.9 284.3L644.7 286.6L644.6 288.9L644.4 291.1L644.2 293.4L644.0 295.7L643.8 297.9L643.5 300.1L643.3 302.4L643.0 304.6L642.7 306.8L642.4 309.0L642.1 311.2L641.8 313.4L641.5 315.6L641.1 317.8L640.7 320.0L640.4 322.2L640.0 324.3L639.5 326.5L639.1 328.6L638.6 330.8 M659.0 227.1L659.4 229.6L659.8 232.0L660.2 234.4L660.5 236.8L660.9 239.2L661.2 241.6L661.5 244.0L661.7 246.3L661.9 248.7L662.2 251.0L662.3 253.4L662.5 255.7L662.7 258.0L662.8 260.3L662.9 262.6L663.0 264.9L663.0 267.2L663.1 269.5L663.1 271.7L663.1 274.0L663.1 276.2L663.0 278.5L663.0 280.7L662.9 282.9L662.8 285.1L662.7 287.3L662.6 289.5L662.4 291.7L662.2 293.9L662.0 296.0L661.8 298.2L661.6 300.3L661.3 302.5L661.0 304.6L660.7 306.7L660.4 308.8L660.1 310.9L659.7 313.0L659.3 315.1L658.9 317.2L658.5 319.3L658.0 321.3L657.6 323.4L657.1 325.4L656.5 327.4L656.0 329.4L655.4 331.4L654.8 333.4L654.2 335.4 M674.2 237.0L674.9 239.4L675.5 241.8L676.0 244.1L676.5 246.5L677.0 248.8L677.4 251.1L677.9 253.4L678.2 255.7L678.6 258.0L678.9 260.3L679.2 262.5L679.5 264.7L679.7 267.0L679.9 269.2L680.1 271.4L680.2 273.6L680.3 275.7L680.4 277.9L680.5 280.0L680.5 282.2L680.6 284.3L680.5 286.4L680.5 288.5L680.4 290.6L680.3 292.7L680.2 294.8L680.1 296.8L679.9 298.9L679.7 300.9L679.5 302.9L679.2 305.0L679.0 307.0L678.7 308.9L678.3 310.9L678.0 312.9L677.6 314.8L677.2 316.8L676.7 318.7L676.2 320.6L675.7 322.5L675.2 324.4L674.6 326.3L674.0 328.1L673.4 330.0L672.7 331.8L672.1 333.6L671.3 335.4L670.6 337.2L669.8 339.0 M511.9 132.0L512.7 133.0L513.2 133.7L513.7 134.3L514.1 134.8L514.4 135.2L515.5 136.5L516.4 137.8L517.4 139.1L518.4 140.4L519.4 141.7L520.4 143.0L521.4 144.3L522.3 145.5L523.3 146.8L524.3 148.1L525.3 149.4L526.3 150.7L527.3 152.0L528.3 153.3L529.2 154.6L530.2 155.9L531.2 157.1L532.2 158.4L533.2 159.7L534.2 161.0L535.1 162.2L536.0 163.5L536.9 164.6L537.8 165.8L538.7 167.0L539.5 168.1L540.4 169.2L541.2 170.3L542.0 171.4L542.9 172.5L543.7 173.6L544.5 174.7L545.4 175.9L546.2 177.0L547.1 178.1L548.0 179.3L548.9 180.5L549.8 181.7L550.8 183.0 M701.7 380.8L699.3 377.4L697.8 375.3L696.6 373.6L695.9 372.5L695.4 371.9L694.4 370.6L693.6 369.5L692.8 368.5L692.0 367.4L691.2 366.4L690.4 365.3L689.6 364.3L688.8 363.2L688.1 362.2L687.3 361.1L686.5 360.1L685.7 359.0L684.9 358.0L684.1 356.9L683.3 355.9L682.5 354.8L681.7 353.8L680.9 352.7L680.1 351.7L679.3 350.7L678.7 349.8L678.0 349.0L677.5 348.3L677.0 347.7L676.5 347.1L676.1 346.6L675.7 346.2L675.3 345.7L674.9 345.3L674.6 344.9L674.2 344.4L673.8 344.0L673.3 343.5L672.9 342.9L672.4 342.3L671.8 341.6L671.2 340.9L670.5 340.0L669.8 339.0 M539.7 129.3L539.5 129.0L539.4 128.9L539.4 128.9L539.4 129.1L539.5 129.3L540.2 130.8L540.9 132.2L541.6 133.7L542.3 135.2L543.0 136.7L543.7 138.2L544.4 139.6L545.1 141.1L545.8 142.6L546.4 144.1L547.1 145.6L547.8 147.1L548.5 148.5L549.2 150.0L549.9 151.5L550.6 153.0L551.3 154.5L552.0 156.0L552.7 157.5L553.4 159.0L554.1 160.5L554.8 162.0L555.5 163.5L556.3 165.0L557.0 166.4L557.6 167.9L558.3 169.4L559.0 170.9L559.7 172.3L560.4 173.8L561.1 175.2L561.7 176.6L562.4 178.1L563.0 179.5L563.7 180.9L564.3 182.3L565.0 183.7L565.7 185.2L566.3 186.6 M673.9 379.7L672.3 376.5L671.4 374.5L670.6 372.9L670.1 371.9L669.9 371.3L669.2 369.9L668.7 368.8L668.2 367.6L667.7 366.5L667.2 365.4L666.7 364.3L666.2 363.2L665.7 362.1L665.2 361.0L664.7 359.8L664.2 358.7L663.7 357.6L663.2 356.5L662.7 355.4L662.3 354.3L661.8 353.1L661.3 352.0L660.8 350.9L660.3 349.8L659.8 348.7L659.4 347.8L659.0 346.9L658.6 346.1L658.3 345.4L658.1 344.8L657.8 344.2L657.6 343.6L657.4 343.1L657.2 342.6L657.0 342.0L656.8 341.5L656.5 340.9L656.3 340.4L656.0 339.7L655.7 339.0L655.4 338.2L655.1 337.4L654.6 336.4L654.2 335.4 M566.0 132.7L564.6 129.0L563.7 126.9L563.1 125.4L562.7 124.6L562.6 124.5L562.9 125.7L563.3 127.3L563.8 128.8L564.2 130.4L564.6 132.0L565.0 133.5L565.4 135.1L565.9 136.7L566.3 138.2L566.7 139.8L567.1 141.4L567.6 143.0L568.0 144.6L568.4 146.2L568.9 147.7L569.3 149.3L569.7 150.9L570.1 152.5L570.6 154.1L571.0 155.8L571.5 157.5L572.1 159.4L572.7 161.3L573.3 163.3L573.9 165.3L574.5 167.3L575.2 169.4L575.8 171.4L576.5 173.4L577.1 175.4L577.7 177.4L578.3 179.3L578.9 181.2L579.5 183.0L580.0 184.8L580.5 186.5L581.0 188.1L581.4 189.7L581.9 191.2 M649.3 374.3L648.5 371.5L647.9 369.7L647.5 368.2L647.3 367.3L647.1 366.7L646.8 365.4L646.5 364.3L646.2 363.2L646.0 362.1L645.7 361.0L645.4 359.9L645.1 358.8L644.9 357.7L644.6 356.6L644.3 355.5L644.1 354.4L643.8 353.3L643.5 352.2L643.2 351.1L643.0 350.0L642.7 348.9L642.4 347.8L642.1 346.8L641.9 345.7L641.6 344.6L641.4 343.6L641.2 342.8L641.0 342.0L640.8 341.2L640.7 340.6L640.6 339.9L640.4 339.3L640.3 338.7L640.2 338.2L640.1 337.6L640.0 337.0L639.9 336.4L639.8 335.8L639.6 335.1L639.5 334.4L639.3 333.6L639.1 332.8L638.9 331.8L638.6 330.8 M591.1 139.8L589.5 132.1L588.6 127.5L587.9 124.2L587.5 122.4L587.3 121.7L587.3 122.5L587.4 124.0L587.6 125.5L587.7 127.0L587.9 128.5L588.0 129.9L588.2 131.4L588.3 132.9L588.4 134.4L588.6 135.9L588.7 137.4L588.9 138.9L589.0 140.4L589.2 141.9L589.3 143.4L589.4 144.9L589.6 146.5L589.7 148.0L589.9 149.5L590.0 151.1L590.3 153.0L590.5 155.1L590.9 157.4L591.3 159.9L591.7 162.5L592.1 165.2L592.6 168.0L593.0 170.8L593.5 173.6L594.0 176.4L594.5 179.2L595.0 181.9L595.4 184.5L595.8 186.9L596.2 189.3L596.6 191.4L596.9 193.4L597.2 195.2L597.4 196.7 M627.0 366.6L626.7 363.9L626.5 362.3L626.3 361.0L626.2 360.1L626.2 359.6L626.1 358.3L626.0 357.3L625.9 356.2L625.8 355.2L625.7 354.2L625.6 353.1L625.5 352.1L625.4 351.1L625.3 350.0L625.2 349.0L625.1 347.9L625.0 346.9L624.9 345.9L624.8 344.8L624.7 343.8L624.6 342.7L624.5 341.7L624.4 340.7L624.3 339.6L624.2 338.6L624.1 337.7L624.1 336.9L624.0 336.1L623.9 335.4L623.9 334.8L623.8 334.1L623.8 333.5L623.8 333.0L623.7 332.4L623.7 331.9L623.6 331.3L623.6 330.7L623.6 330.1L623.5 329.5L623.4 328.8L623.4 328.0L623.3 327.2L623.2 326.3L623.1 325.3 M615.2 149.7L615.2 140.2L615.3 134.6L615.3 130.4L615.3 128.0L615.3 127.2L615.2 127.7L615.1 129.0L615.1 130.4L615.0 131.7L614.9 133.0L614.8 134.4L614.8 135.7L614.7 137.1L614.6 138.4L614.6 139.8L614.5 141.1L614.4 142.5L614.3 143.8L614.3 145.2L614.2 146.5L614.1 147.9L614.0 149.2L613.9 150.6L613.9 151.9L613.8 153.4L613.7 155.3L613.6 157.4L613.6 159.8L613.5 162.4L613.4 165.2L613.4 168.1L613.3 171.2L613.3 174.3L613.2 177.5L613.2 180.6L613.1 183.8L613.1 186.8L613.1 189.8L613.0 192.6L613.0 195.2L612.9 197.6L612.9 199.7L612.9 201.6L612.8 203.1 M606.0 357.0L606.2 354.6L606.3 353.1L606.4 352.0L606.5 351.1L606.5 350.7L606.6 349.5L606.6 348.6L606.7 347.6L606.7 346.7L606.7 345.7L606.8 344.8L606.8 343.8L606.9 342.9L606.9 341.9L607.0 340.9L607.0 340.0L607.1 339.0L607.1 338.1L607.1 337.1L607.2 336.2L607.2 335.2L607.3 334.3L607.3 333.3L607.4 332.4L607.4 331.4L607.4 330.6L607.5 329.8L607.5 329.1L607.5 328.5L607.5 327.8L607.5 327.3L607.5 326.7L607.5 326.2L607.5 325.6L607.6 325.1L607.6 324.6L607.6 324.0L607.6 323.4L607.6 322.8L607.6 322.2L607.6 321.5L607.6 320.7L607.7 319.8L607.7 318.9 M638.8 162.3L641.5 152.1L643.1 146.0L644.3 141.6L644.9 139.0L645.2 138.0L645.2 138.3L644.9 139.5L644.7 140.7L644.4 141.9L644.2 143.1L643.9 144.3L643.7 145.5L643.5 146.7L643.2 147.9L643.0 149.2L642.7 150.4L642.5 151.6L642.2 152.8L642.0 154.0L641.7 155.2L641.5 156.4L641.3 157.6L641.0 158.8L640.8 160.0L640.5 161.3L640.1 163.1L639.6 165.1L639.1 167.4L638.5 170.0L637.8 172.7L637.1 175.7L636.3 178.7L635.5 181.8L634.7 185.0L633.9 188.2L633.1 191.3L632.3 194.4L631.5 197.3L630.8 200.1L630.1 202.7L629.5 205.0L629.0 207.1L628.5 208.8L628.2 210.2 M585.8 345.6L586.4 343.6L586.8 342.4L587.1 341.4L587.3 340.8L587.4 340.4L587.6 339.4L587.8 338.5L587.9 337.7L588.1 336.8L588.3 336.0L588.4 335.1L588.6 334.3L588.8 333.4L588.9 332.6L589.1 331.8L589.3 330.9L589.4 330.1L589.6 329.2L589.8 328.4L589.9 327.5L590.1 326.7L590.3 325.9L590.4 325.0L590.6 324.2L590.8 323.4L590.9 322.6L591.0 321.9L591.1 321.3L591.2 320.7L591.3 320.1L591.3 319.5L591.4 319.0L591.4 318.5L591.5 318.0L591.5 317.5L591.6 317.0L591.6 316.4L591.7 315.9L591.7 315.3L591.8 314.7L591.9 314.1L592.0 313.3L592.1 312.6L592.3 311.8 M662.5 177.8L668.3 168.4L671.8 162.7L674.4 158.6L676.0 156.2L676.6 155.3L676.7 155.5L676.2 156.5L675.8 157.5L675.4 158.6L674.9 159.6L674.5 160.7L674.1 161.7L673.7 162.7L673.2 163.8L672.8 164.8L672.4 165.9L672.0 166.9L671.5 168.0L671.1 169.0L670.7 170.1L670.3 171.1L669.9 172.1L669.4 173.2L669.0 174.2L668.5 175.4L667.8 177.0L666.9 178.8L665.8 180.8L664.5 183.1L663.2 185.5L661.7 188.1L660.1 190.8L658.4 193.6L656.8 196.4L655.1 199.2L653.4 201.9L651.8 204.6L650.2 207.1L648.7 209.5L647.3 211.8L646.1 213.8L645.1 215.5L644.2 217.0L643.6 218.2 M565.6 332.1L566.6 330.6L567.2 329.6L567.7 328.8L568.0 328.3L568.2 328.0L568.5 327.1L568.8 326.4L569.1 325.7L569.4 325.0L569.7 324.3L570.0 323.6L570.3 322.9L570.6 322.1L570.8 321.4L571.1 320.7L571.4 320.0L571.7 319.3L572.0 318.6L572.3 317.9L572.6 317.2L572.9 316.5L573.2 315.8L573.5 315.1L573.8 314.3L574.0 313.7L574.3 313.0L574.5 312.4L574.7 311.9L574.8 311.4L575.0 310.9L575.1 310.4L575.2 309.9L575.3 309.5L575.4 309.1L575.5 308.6L575.6 308.2L575.7 307.7L575.8 307.3L575.9 306.8L576.0 306.2L576.2 305.7L576.4 305.1L576.6 304.5L576.9 303.8 M686.7 197.2L695.6 190.1L700.9 185.9L704.9 182.7L707.2 180.9L708.1 180.2L708.2 180.4L707.6 181.2L706.9 182.0L706.3 182.8L705.6 183.5L704.9 184.3L704.3 185.1L703.6 185.9L702.9 186.7L702.3 187.5L701.6 188.3L701.0 189.1L700.3 189.9L699.7 190.7L699.0 191.5L698.3 192.3L697.7 193.1L697.0 194.0L696.4 194.8L695.6 195.7L694.5 196.8L693.1 198.2L691.4 199.7L689.5 201.4L687.5 203.3L685.2 205.2L682.9 207.2L680.5 209.2L678.0 211.2L675.5 213.3L673.1 215.3L670.7 217.2L668.4 219.1L666.3 220.8L664.3 222.4L662.5 223.9L661.0 225.2L659.8 226.2L659.0 227.1 M544.8 315.6L546.4 314.2L547.3 313.4L548.1 312.7L548.6 312.3L548.8 312.0L549.4 311.4L549.8 310.8L550.3 310.3L550.7 309.8L551.1 309.3L551.5 308.8L552.0 308.3L552.4 307.7L552.8 307.2L553.2 306.7L553.7 306.2L554.1 305.7L554.5 305.2L555.0 304.6L555.4 304.1L555.8 303.6L556.2 303.1L556.7 302.6L557.1 302.1L557.5 301.6L557.9 301.1L558.2 300.7L558.4 300.3L558.6 300.0L558.8 299.6L559.0 299.3L559.1 299.0L559.3 298.8L559.4 298.5L559.5 298.2L559.6 297.9L559.8 297.6L559.9 297.3L560.1 297.0L560.3 296.6L560.5 296.3L560.8 295.8L561.2 295.4L561.5 294.9 M712.3 222.7L722.4 219.4L728.5 217.4L733.0 215.9L735.6 215.0L736.6 214.7L736.6 214.8L735.6 215.1L734.7 215.5L733.7 215.9L732.7 216.3L731.8 216.6L730.8 217.0L729.9 217.4L728.9 217.8L727.9 218.1L727.0 218.5L726.0 218.9L725.1 219.2L724.1 219.6L723.1 220.0L722.2 220.4L721.2 220.7L720.3 221.1L719.3 221.5L718.2 221.9L716.7 222.5L714.9 223.1L712.9 223.8L710.6 224.6L708.1 225.5L705.4 226.4L702.6 227.4L699.7 228.3L696.8 229.3L693.9 230.3L691.1 231.3L688.3 232.2L685.6 233.1L683.1 233.9L680.8 234.7L678.7 235.4L676.9 236.1L675.4 236.6L674.2 237.0 M522.3 294.0L525.1 292.8L526.8 292.1L528.1 291.5L529.0 291.2L529.4 291.0L530.3 290.7L530.9 290.4L531.5 290.2L532.1 290.0L532.7 289.8L533.3 289.5L533.9 289.3L534.5 289.1L535.1 288.9L535.7 288.6L536.3 288.4L536.9 288.2L537.5 288.0L538.0 287.7L538.6 287.5L539.2 287.3L539.8 287.0L540.4 286.8L541.0 286.6L541.6 286.4L542.0 286.2L542.4 286.1L542.7 286.0L543.0 285.9L543.2 285.9L543.3 285.8L543.4 285.8L543.5 285.8L543.6 285.8L543.7 285.8L543.8 285.8L543.9 285.8L544.1 285.7L544.3 285.7L544.5 285.6L544.9 285.5L545.2 285.4L545.7 285.2L546.2 285.0 M736.8 255.3L743.3 255.3L747.1 255.3L749.9 255.3L751.4 255.3L751.9 255.3L751.0 255.2L749.6 255.2L748.1 255.1L746.6 255.0L745.2 255.0L743.7 254.9L742.3 254.9L740.8 254.8L739.3 254.8L737.9 254.7L736.4 254.7L735.0 254.6L733.5 254.6L732.1 254.5L730.6 254.4L729.2 254.4L727.7 254.3L726.2 254.3L724.8 254.2L723.2 254.2L721.5 254.1L719.4 254.0L717.3 254.0L714.9 253.9L712.4 253.9L709.8 253.9L707.1 253.8L704.4 253.8L701.6 253.7L698.8 253.7L696.0 253.7L693.3 253.7L690.6 253.6L688.1 253.6L685.7 253.6L683.4 253.5L681.3 253.5L679.5 253.5L677.9 253.4 M499.3 266.0L504.6 265.5L508.0 265.2L510.5 265.0L512.1 264.9L513.0 264.8L514.5 264.8L515.6 264.9L516.6 264.9L517.7 265.0L518.8 265.0L519.8 265.1L520.9 265.1L521.9 265.2L523.0 265.2L524.0 265.3L525.1 265.3L526.2 265.3L527.2 265.4L528.3 265.4L529.3 265.5L530.4 265.5L531.4 265.6L532.5 265.6L533.5 265.6L534.5 265.7L535.3 265.8L535.9 265.9L536.4 266.0L536.8 266.1L537.1 266.3L537.4 266.4L537.6 266.6L537.7 266.8L537.9 267.0L538.0 267.2L538.2 267.4L538.4 267.6L538.7 267.8L539.1 267.9L539.5 268.1L540.1 268.3L540.8 268.4L541.6 268.5L542.6 268.6 M752.1 285.5L753.4 285.8L754.2 285.9L754.6 286.0L754.6 286.0L754.4 286.0L752.8 285.6L751.0 285.2L749.2 284.8L747.3 284.4L745.5 284.0L743.7 283.6L741.9 283.2L740.1 282.7L738.3 282.3L736.5 281.9L734.7 281.5L732.9 281.1L731.1 280.7L729.3 280.3L727.4 279.9L725.6 279.5L723.8 279.1L722.0 278.7L720.2 278.2L718.4 277.8L716.5 277.4L714.6 277.0L712.6 276.5L710.6 276.1L708.5 275.6L706.4 275.1L704.4 274.7L702.2 274.2L700.1 273.7L698.0 273.2L695.9 272.8L693.8 272.3L691.7 271.8L689.6 271.4L687.6 270.9L685.6 270.5L683.6 270.0L681.7 269.6L679.9 269.2 M482.9 239.0L489.1 239.8L492.9 240.3L495.9 240.7L497.8 240.9L498.8 241.1L500.8 241.5L502.2 241.8L503.7 242.1L505.1 242.5L506.6 242.8L508.0 243.1L509.5 243.4L510.9 243.8L512.4 244.1L513.8 244.4L515.3 244.7L516.7 245.0L518.1 245.4L519.6 245.7L521.0 246.0L522.5 246.3L523.9 246.6L525.4 247.0L526.8 247.3L528.2 247.6L529.3 247.9L530.3 248.1L531.1 248.4L531.7 248.6L532.3 248.9L532.7 249.1L533.1 249.4L533.4 249.6L533.7 249.9L534.1 250.1L534.4 250.4L534.8 250.6L535.2 250.9L535.7 251.2L536.4 251.5L537.2 251.8L538.1 252.2L539.3 252.5L540.6 252.8 M759.3 313.5L757.3 312.7L756.0 312.2L754.9 311.7L754.0 311.4L753.4 311.2L751.3 310.4L749.3 309.6L747.3 308.9L745.3 308.1L743.3 307.4L741.3 306.7L739.3 305.9L737.3 305.2L735.3 304.4L733.3 303.7L731.3 302.9L729.3 302.2L727.3 301.5L725.3 300.7L723.3 300.0L721.3 299.2L719.3 298.5L717.3 297.7L715.3 297.0L713.3 296.2L711.4 295.5L709.6 294.8L707.8 294.2L706.0 293.5L704.3 292.9L702.7 292.3L701.0 291.7L699.4 291.1L697.8 290.6L696.2 290.0L694.5 289.4L692.9 288.8L691.3 288.2L689.6 287.6L687.9 287.0L686.2 286.4L684.4 285.7L682.5 285.0L680.6 284.3 M472.6 212.5L478.5 214.3L482.2 215.5L485.1 216.3L487.0 216.9L488.0 217.3L490.2 218.0L491.9 218.7L493.6 219.3L495.3 219.9L497.0 220.5L498.7 221.1L500.4 221.8L502.1 222.4L503.8 223.0L505.5 223.6L507.2 224.2L508.9 224.8L510.6 225.5L512.3 226.1L514.0 226.7L515.7 227.3L517.4 227.9L519.1 228.5L520.8 229.2L522.5 229.7L523.9 230.3L525.1 230.8L526.2 231.2L527.1 231.6L527.9 232.0L528.7 232.3L529.3 232.7L529.9 233.0L530.5 233.3L531.1 233.6L531.7 234.0L532.3 234.3L533.0 234.7L533.8 235.1L534.7 235.5L535.8 236.0L537.0 236.5L538.4 237.1L539.9 237.7 M758.3 338.4L755.1 336.6L753.1 335.5L751.5 334.5L750.3 333.9L749.5 333.5L747.3 332.3L745.3 331.3L743.3 330.3L741.4 329.3L739.4 328.3L737.4 327.3L735.4 326.3L733.5 325.3L731.5 324.3L729.5 323.3L727.5 322.2L725.6 321.2L723.6 320.2L721.6 319.2L719.6 318.2L717.6 317.2L715.7 316.2L713.7 315.2L711.7 314.2L709.8 313.2L708.0 312.3L706.2 311.4L704.6 310.6L703.0 309.8L701.5 309.1L700.0 308.4L698.6 307.7L697.1 307.0L695.7 306.4L694.3 305.7L692.9 305.1L691.5 304.4L690.1 303.8L688.5 303.1L687.0 302.3L685.3 301.6L683.6 300.7L681.8 299.8L679.9 298.9 M468.9 187.0L473.9 189.4L477.0 190.9L479.5 192.1L481.2 192.9L482.1 193.3L484.4 194.4L486.2 195.3L488.0 196.2L489.8 197.1L491.6 198.0L493.4 198.9L495.2 199.8L497.1 200.7L498.9 201.7L500.7 202.6L502.5 203.5L504.3 204.4L506.1 205.3L507.9 206.2L509.8 207.1L511.6 208.0L513.4 208.9L515.2 209.8L517.0 210.7L518.8 211.6L520.3 212.4L521.8 213.1L523.0 213.7L524.2 214.3L525.3 214.9L526.3 215.4L527.2 215.9L528.1 216.4L528.9 216.9L529.8 217.4L530.7 217.9L531.6 218.4L532.6 218.9L533.6 219.5L534.7 220.1L536.0 220.7L537.3 221.5L538.9 222.2L540.6 223.1 M748.6 359.0L745.4 356.5L743.3 354.9L741.6 353.7L740.5 352.8L739.7 352.3L737.7 350.9L735.9 349.7L734.1 348.6L732.4 347.4L730.6 346.2L728.8 345.0L727.0 343.9L725.3 342.7L723.5 341.5L721.7 340.3L719.9 339.2L718.2 338.0L716.4 336.8L714.6 335.6L712.9 334.5L711.1 333.3L709.3 332.1L707.5 330.9L705.8 329.8L704.0 328.6L702.4 327.6L700.9 326.6L699.4 325.7L698.1 324.8L696.7 324.0L695.5 323.3L694.3 322.6L693.0 321.9L691.8 321.2L690.7 320.5L689.4 319.8L688.2 319.1L686.9 318.4L685.6 317.6L684.3 316.8L682.8 315.9L681.3 315.0L679.7 314.0L678.0 312.9 M473.0 163.8L476.5 166.1L478.7 167.5L480.4 168.6L481.7 169.4L482.4 169.9L484.4 171.2L486.2 172.4L487.9 173.5L489.7 174.6L491.4 175.8L493.2 176.9L494.9 178.0L496.7 179.2L498.4 180.3L500.2 181.5L501.9 182.6L503.7 183.7L505.4 184.9L507.2 186.0L508.9 187.2L510.7 188.3L512.4 189.4L514.2 190.6L515.9 191.7L517.6 192.8L519.2 193.8L520.7 194.8L522.1 195.7L523.4 196.6L524.6 197.4L525.8 198.2L527.0 199.0L528.1 199.7L529.3 200.4L530.4 201.2L531.5 201.9L532.7 202.7L533.9 203.5L535.1 204.3L536.4 205.1L537.8 206.0L539.3 207.0L540.9 208.0L542.5 209.1 M730.0 373.7L727.0 370.6L725.0 368.6L723.5 367.1L722.4 366.0L721.8 365.4L720.2 364.0L718.8 362.8L717.4 361.6L716.0 360.4L714.6 359.2L713.2 358.0L711.9 356.8L710.5 355.6L709.1 354.4L707.7 353.1L706.3 351.9L704.9 350.7L703.5 349.5L702.2 348.3L700.8 347.1L699.4 345.9L698.0 344.7L696.6 343.5L695.3 342.3L693.9 341.2L692.7 340.1L691.5 339.1L690.4 338.3L689.4 337.5L688.5 336.7L687.6 336.1L686.7 335.4L685.8 334.8L685.0 334.2L684.1 333.6L683.3 333.0L682.4 332.4L681.5 331.7L680.5 331.0L679.5 330.2L678.4 329.4L677.2 328.4L676.0 327.4L674.6 326.3 M486.6 144.7L488.6 146.4L489.9 147.6L491.0 148.5L491.8 149.2L492.3 149.7L494.0 151.1L495.5 152.4L497.0 153.6L498.5 154.9L500.0 156.2L501.5 157.5L502.9 158.8L504.4 160.1L505.9 161.3L507.4 162.6L508.9 163.9L510.4 165.2L511.9 166.5L513.4 167.8L514.9 169.0L516.3 170.3L517.8 171.6L519.3 172.9L520.8 174.2L522.3 175.4L523.7 176.6L525.0 177.8L526.3 178.9L527.5 180.0L528.7 181.0L529.9 182.0L531.1 183.0L532.2 184.0L533.3 185.0L534.5 185.9L535.6 186.9L536.8 187.9L538.0 188.9L539.2 189.9L540.4 191.0L541.7 192.1L543.0 193.3L544.4 194.5L545.9 195.7" fill="none" stroke="#000" stroke-width="1" shape-rendering="crispEdges"/></g>
<g id="arrows"><path d="M749.0 358.5L747.2 360.7L745.3 362.8L743.2 364.9L741.0 366.8L738.7 368.5L736.2 370.2L733.6 371.8L730.9 373.2L728.1 374.6L725.2 375.8L722.2 376.9L719.0 377.8L715.8 378.7L712.4 379.4L709.0 380.0L705.5 380.5L701.8 380.8L698.1 381.0L694.3 381.1L690.4 381.1L686.5 381.0L682.5 380.7L678.4 380.3L674.2 379.7L670.0 379.1L665.7 378.3L661.4 377.4L657.0 376.4L652.6 375.3L648.1 374.0L643.7 372.6L639.1 371.1L634.6 369.5L630.0 367.8L625.5 366.0L620.9 364.0L616.3 362.0L611.7 359.8L607.1 357.5L602.5 355.2L597.9 352.7L593.4 350.1L588.9 347.5L584.3 344.7L579.9 341.9L575.4 338.9L571.0 335.9L566.6 332.8L562.3 329.7L558.1 326.4L553.9 323.1L549.7 319.7L545.6 316.3L541.6 312.8L537.7 309.2L533.8 305.6L530.0 301.9L526.3 298.2L522.7 294.4L519.2 290.6L515.8 286.8L512.4 282.9L509.2 279.1L506.1 275.1L503.1 271.2L500.2 267.3L497.4 263.3L494.7 259.3L492.1 255.3L489.7 251.4L487.4 247.4L485.2 243.4L483.2 239.5L481.2 235.5L479.5 231.6L477.8 227.7L476.3 223.9L474.9 220.0L473.7 216.2L472.6 212.5L471.6 208.7L470.8 205.1L470.1 201.5L469.6 197.9L469.2 194.4L469.0 190.9L468.9 187.5L468.9 184.2L469.1 181.0L469.4 177.8L469.9 174.7L470.6 171.7L471.3 168.7L472.2 165.9L473.3 163.1L474.5 160.5L475.8 157.9L477.3 155.4L478.9 153.0L480.7 150.8L482.5 148.6L484.5 146.5L486.7 144.6L489.0 142.7L491.3 141.0L493.9 139.4L496.5 137.9L499.2 136.5L502.1 135.2L505.1 134.1L508.2 133.0L511.4 132.1L514.7 131.4L518.1 130.7L521.6 130.2L525.1 129.7L528.8 129.5L532.6 129.3L536.4 129.3L540.3 129.3L544.3 129.6L548.4 129.9L552.5 130.4L556.7 131.0L560.9 131.7L565.2 132.5L569.6 133.5L574.0 134.6L578.4 135.8L582.9 137.1L587.4 138.5L591.9 140.1L596.5 141.7L601.0 143.5L605.6 145.4L610.2 147.4L614.8 149.5L619.4 151.7L624.0 154.1L628.6 156.5L633.1 159.0L637.7 161.6L642.2 164.3L646.7 167.1L651.2 170.0L655.6 173.0L660.0 176.0L664.3 179.1L668.6 182.4L672.8 185.6L677.0 189.0L681.1 192.4L685.2 195.9L689.2 199.4L693.1 203.0L696.9 206.6L700.6 210.3L704.3 214.1L707.9 217.9L711.3 221.7L714.7 225.5L718.0 229.4L721.2 233.3L724.2 237.2L727.2 241.2L730.1 245.1L732.8 249.1L735.4 253.1L737.9 257.0L740.3 261.0L742.5 265.0L744.6 268.9L746.6 272.9L748.5 276.8L750.2 280.7L751.8 284.6L753.2 288.5L754.5 292.3L755.7 296.1L756.7 299.8L757.6 303.5L758.4 307.1L759.0 310.7L759.4 314.3L759.7 317.8L759.9 321.2L759.9 324.5L759.8 327.8L759.5 331.0L759.1 334.2L758.6 337.2L757.9 340.2L757.0 343.1L756.0 345.9L754.9 348.6L753.7 351.2L752.3 353.8L750.7 356.2L749.0 358.5Z" fill="none" stroke="#40e040" stroke-width="1"/>
<path d="M470.7 204.8L456.3 206.9 M473.6 216.0L459.4 219.0 M477.7 227.5L463.9 231.3 M483.0 239.1L469.6 243.7 M489.3 250.7L476.5 256.2 M496.7 262.3L484.5 268.6 M505.0 273.7L493.4 280.8 M514.1 284.9L503.1 292.8 M524.0 295.8L513.7 304.5 M534.5 306.3L525.1 315.8 M545.7 316.4L537.1 326.6 M557.4 325.9L549.6 336.8 M569.6 334.9L562.7 346.5 M582.1 343.3L576.1 355.5 M594.9 351.0L589.9 363.7 M608.0 357.9L603.8 371.2 M621.1 364.1L617.9 377.9 M634.3 369.4L632.0 383.8 M647.4 373.8L646.1 388.6 M660.3 377.2L660.0 392.4 M673.0 379.6L673.6 395.1 M685.3 380.9L686.9 396.6 M697.0 381.1L699.5 396.9 M708.2 380.1L711.6 395.9 M718.6 378.0L722.8 393.6 M728.1 374.6L733.0 389.9 M736.6 370.0L742.1 384.9 M743.9 364.2L750.0 378.5 M750.0 357.1L756.5 370.8 M754.8 348.9L761.5 361.7 M575.4 134.9L568.9 131.9 M560.1 131.5L552.5 128.3 M545.6 129.7L536.9 126.3 M532.0 129.3L522.3 125.9 M519.5 130.5L508.9 127.1 M508.2 133.0L496.8 129.9 M498.3 137.0L486.1 134.1 M489.7 142.2L477.0 139.7 M482.6 148.6L469.3 146.5 M476.9 156.0L463.3 154.5 M472.8 164.4L458.7 163.5 M470.1 173.6L455.7 173.3 M468.9 183.4L454.4 184.0" fill="none" stroke="#f00" stroke-width="1.2"/>
<path d="M446.4 208.4L455.7 203.0L456.9 210.9Z M449.6 221.0L458.6 215.1L460.2 222.9Z M454.3 233.9L462.9 227.4L465.0 235.2Z M460.2 247.0L468.3 240.0L471.0 247.5Z M467.3 260.1L475.0 252.5L478.1 259.9Z M475.6 273.1L482.6 265.0L486.3 272.1Z M484.9 285.9L491.3 277.4L495.4 284.2Z M495.2 298.5L500.8 289.6L505.5 296.1Z M506.3 310.8L511.2 301.4L516.3 307.5Z M518.2 322.6L522.3 312.9L527.9 318.6Z M530.8 333.9L534.0 324.0L540.1 329.1Z M544.0 344.7L546.4 334.5L552.9 339.1Z M557.7 354.8L559.2 344.4L566.1 348.5Z M571.8 364.3L572.5 353.7L579.7 357.2Z M586.2 372.9L586.1 362.2L593.6 365.2Z M600.8 380.7L600.0 370.0L607.6 372.4Z M615.6 387.7L614.0 377.0L621.8 378.8Z M630.5 393.6L628.1 383.1L636.0 384.4Z M645.2 398.6L642.1 388.3L650.1 388.9Z M659.8 402.4L656.0 392.3L664.0 392.5Z M674.0 405.1L669.6 395.3L677.6 394.9Z M687.9 406.6L682.9 397.0L690.8 396.2Z M701.1 406.8L695.6 397.5L703.5 396.3Z M713.7 405.7L707.7 396.7L715.5 395.1Z M725.4 403.3L718.9 394.6L726.6 392.6Z M736.1 399.5L729.2 391.2L736.8 388.7Z M745.6 394.3L738.4 386.3L745.9 383.5Z M753.9 387.7L746.3 380.1L753.7 377.0Z M760.8 379.8L752.9 372.5L760.1 369.1Z M766.1 370.6L757.9 363.6L765.0 359.9Z M564.2 129.7L570.0 129.7L567.9 134.1Z M547.0 125.9L553.6 125.6L551.4 130.9Z M530.6 123.8L538.1 123.3L535.7 129.2Z M515.3 123.4L523.5 122.6L521.2 129.2Z M501.3 124.7L510.1 123.5L507.8 130.8Z M488.6 127.6L497.9 126.0L495.8 133.7Z M477.4 132.0L487.1 130.2L485.2 138.0Z M467.7 137.9L477.7 135.8L476.2 143.6Z M459.7 145.1L469.9 142.6L468.7 150.5Z M453.4 153.4L463.7 150.5L462.9 158.5Z M448.7 162.9L459.0 159.5L458.5 167.5Z M445.7 173.2L455.8 169.3L455.7 177.3Z M444.4 184.3L454.2 180.0L454.5 188.0Z" fill="#f00"/>
<path d="M758.0 345.8a3.5 3.5 0 1 0 7 0a3.5 3.5 0 1 0 -7 0Z M759.8 335.0a3.5 3.5 0 1 0 7 0a3.5 3.5 0 1 0 -7 0Z M759.8 323.3a3.5 3.5 0 1 0 7 0a3.5 3.5 0 1 0 -7 0Z M758.1 310.7a3.5 3.5 0 1 0 7 0a3.5 3.5 0 1 0 -7 0Z M754.6 297.3a3.5 3.5 0 1 0 7 0a3.5 3.5 0 1 0 -7 0Z M749.4 283.4a3.5 3.5 0 1 0 7 0a3.5 3.5 0 1 0 -7 0Z M742.3 269.1a3.5 3.5 0 1 0 7 0a3.5 3.5 0 1 0 -7 0Z M733.6 254.5a3.5 3.5 0 1 0 7 0a3.5 3.5 0 1 0 -7 0Z M723.3 239.9a3.5 3.5 0 1 0 7 0a3.5 3.5 0 1 0 -7 0Z M711.5 225.5a3.5 3.5 0 1 0 7 0a3.5 3.5 0 1 0 -7 0Z M698.3 211.4a3.5 3.5 0 1 0 7 0a3.5 3.5 0 1 0 -7 0Z M683.9 197.9a3.5 3.5 0 1 0 7 0a3.5 3.5 0 1 0 -7 0Z M668.6 185.2a3.5 3.5 0 1 0 7 0a3.5 3.5 0 1 0 -7 0Z M652.5 173.3a3.5 3.5 0 1 0 7 0a3.5 3.5 0 1 0 -7 0Z M635.9 162.6a3.5 3.5 0 1 0 7 0a3.5 3.5 0 1 0 -7 0Z M618.9 153.2a3.5 3.5 0 1 0 7 0a3.5 3.5 0 1 0 -7 0Z M601.9 145.1a3.5 3.5 0 1 0 7 0a3.5 3.5 0 1 0 -7 0Z M585.0 138.5a3.5 3.5 0 1 0 7 0a3.5 3.5 0 1 0 -7 0Z" fill="#f00"/>
<path d="M444.6 196.1L454.2 191.2L454.9 199.2Z" fill="#f0f"/>
<path d="M469.2 193.9L454.6 195.2" stroke="#f0f" stroke-width="1.2"/>
<path d="M465.7 190.4l7 7M472.7 190.4l-7 7 M467.2 201.3l7 7M474.2 201.3l-7 7 M470.1 212.5l7 7M477.1 212.5l-7 7 M474.2 224.0l7 7M481.2 224.0l-7 7 M479.5 235.6l7 7M486.5 235.6l-7 7 M485.8 247.2l7 7M492.8 247.2l-7 7 M493.2 258.8l7 7M500.2 258.8l-7 7 M501.5 270.2l7 7M508.5 270.2l-7 7 M510.6 281.4l7 7M517.6 281.4l-7 7 M520.5 292.3l7 7M527.5 292.3l-7 7 M531.0 302.8l7 7M538.0 302.8l-7 7 M542.2 312.9l7 7M549.2 312.9l-7 7 M553.9 322.4l7 7M560.9 322.4l-7 7 M566.1 331.4l7 7M573.1 331.4l-7 7 M578.6 339.8l7 7M585.6 339.8l-7 7 M591.4 347.5l7 7M598.4 347.5l-7 7 M604.5 354.4l7 7M611.5 354.4l-7 7 M617.6 360.6l7 7M624.6 360.6l-7 7 M630.8 365.9l7 7M637.8 365.9l-7 7 M643.9 370.3l7 7M650.9 370.3l-7 7 M656.8 373.7l7 7M663.8 373.7l-7 7 M669.5 376.1l7 7M676.5 376.1l-7 7 M681.8 377.4l7 7M688.8 377.4l-7 7 M693.5 377.6l7 7M700.5 377.6l-7 7 M704.7 376.6l7 7M711.7 376.6l-7 7 M715.1 374.5l7 7M722.1 374.5l-7 7 M724.6 371.1l7 7M731.6 371.1l-7 7 M733.1 366.5l7 7M740.1 366.5l-7 7 M740.4 360.7l7 7M747.4 360.7l-7 7 M746.5 353.6l7 7M753.5 353.6l-7 7 M751.3 345.4l7 7M758.3 345.4l-7 7 M754.5 336.1l7 7M761.5 336.1l-7 7 M756.2 325.8l7 7M763.2 325.8l-7 7 M756.3 314.5l7 7M763.3 314.5l-7 7 M754.6 302.3l7 7M761.6 302.3l-7 7 M751.2 289.4l7 7M758.2 289.4l-7 7 M746.2 276.0l7 7M753.2 276.0l-7 7 M739.4 262.2l7 7M746.4 262.2l-7 7 M731.0 248.2l7 7M738.0 248.2l-7 7 M721.0 234.1l7 7M728.0 234.1l-7 7 M709.6 220.2l7 7M716.6 220.2l-7 7 M696.9 206.6l7 7M703.9 206.6l-7 7 M683.1 193.6l7 7M690.1 193.6l-7 7 M668.3 181.3l7 7M675.3 181.3l-7 7 M652.8 170.0l7 7M659.8 170.0l-7 7 M636.8 159.6l7 7M643.8 159.6l-7 7 M620.4 150.5l7 7M627.4 150.5l-7 7 M604.0 142.7l7 7M611.0 142.7l-7 7 M587.8 136.3l7 7M594.8 136.3l-7 7 M571.9 131.4l7 7M578.9 131.4l-7 7 M556.6 128.0l7 7M563.6 128.0l-7 7 M542.1 126.2l7 7M549.1 126.2l-7 7 M528.5 125.8l7 7M535.5 125.8l-7 7 M516.0 127.0l7 7M523.0 127.0l-7 7 M504.7 129.5l7 7M511.7 129.5l-7 7 M494.8 133.5l7 7M501.8 133.5l-7 7 M486.2 138.7l7 7M493.2 138.7l-7 7 M479.1 145.1l7 7M486.1 145.1l-7 7 M473.4 152.5l7 7M480.4 152.5l-7 7 M469.3 160.9l7 7M476.3 160.9l-7 7 M466.6 170.1l7 7M473.6 170.1l-7 7 M465.4 179.9l7 7M472.4 179.9l-7 7" fill="none" stroke="#50e050" stroke-width="0.8"/>
<path d="M466.0 193.9a3.2 3.2 0 1 0 6.4 0a3.2 3.2 0 1 0 -6.4 0Z M467.5 204.8a3.2 3.2 0 1 0 6.4 0a3.2 3.2 0 1 0 -6.4 0Z M470.4 216.0a3.2 3.2 0 1 0 6.4 0a3.2 3.2 0 1 0 -6.4 0Z M474.5 227.5a3.2 3.2 0 1 0 6.4 0a3.2 3.2 0 1 0 -6.4 0Z M479.8 239.1a3.2 3.2 0 1 0 6.4 0a3.2 3.2 0 1 0 -6.4 0Z M486.1 250.7a3.2 3.2 0 1 0 6.4 0a3.2 3.2 0 1 0 -6.4 0Z M493.5 262.3a3.2 3.2 0 1 0 6.4 0a3.2 3.2 0 1 0 -6.4 0Z M501.8 273.7a3.2 3.2 0 1 0 6.4 0a3.2 3.2 0 1 0 -6.4 0Z M510.9 284.9a3.2 3.2 0 1 0 6.4 0a3.2 3.2 0 1 0 -6.4 0Z M520.8 295.8a3.2 3.2 0 1 0 6.4 0a3.2 3.2 0 1 0 -6.4 0Z M531.3 306.3a3.2 3.2 0 1 0 6.4 0a3.2 3.2 0 1 0 -6.4 0Z M542.5 316.4a3.2 3.2 0 1 0 6.4 0a3.2 3.2 0 1 0 -6.4 0Z M554.2 325.9a3.2 3.2 0 1 0 6.4 0a3.2 3.2 0 1 0 -6.4 0Z M566.4 334.9a3.2 3.2 0 1 0 6.4 0a3.2 3.2 0 1 0 -6.4 0Z M578.9 343.3a3.2 3.2 0 1 0 6.4 0a3.2 3.2 0 1 0 -6.4 0Z M591.7 351.0a3.2 3.2 0 1 0 6.4 0a3.2 3.2 0 1 0 -6.4 0Z M604.8 357.9a3.2 3.2 0 1 0 6.4 0a3.2 3.2 0 1 0 -6.4 0Z M617.9 364.1a3.2 3.2 0 1 0 6.4 0a3.2 3.2 0 1 0 -6.4 0Z M631.1 369.4a3.2 3.2 0 1 0 6.4 0a3.2 3.2 0 1 0 -6.4 0Z M644.2 373.8a3.2 3.2 0 1 0 6.4 0a3.2 3.2 0 1 0 -6.4 0Z M657.1 377.2a3.2 3.2 0 1 0 6.4 0a3.2 3.2 0 1 0 -6.4 0Z M669.8 379.6a3.2 3.2 0 1 0 6.4 0a3.2 3.2 0 1 0 -6.4 0Z M682.1 380.9a3.2 3.2 0 1 0 6.4 0a3.2 3.2 0 1 0 -6.4 0Z M693.8 381.1a3.2 3.2 0 1 0 6.4 0a3.2 3.2 0 1 0 -6.4 0Z M705.0 380.1a3.2 3.2 0 1 0 6.4 0a3.2 3.2 0 1 0 -6.4 0Z M715.4 378.0a3.2 3.2 0 1 0 6.4 0a3.2 3.2 0 1 0 -6.4 0Z M724.9 374.6a3.2 3.2 0 1 0 6.4 0a3.2 3.2 0 1 0 -6.4 0Z M733.4 370.0a3.2 3.2 0 1 0 6.4 0a3.2 3.2 0 1 0 -6.4 0Z M740.7 364.2a3.2 3.2 0 1 0 6.4 0a3.2 3.2 0 1 0 -6.4 0Z M746.8 357.1a3.2 3.2 0 1 0 6.4 0a3.2 3.2 0 1 0 -6.4 0Z M751.6 348.9a3.2 3.2 0 1 0 6.4 0a3.2 3.2 0 1 0 -6.4 0Z M754.8 339.6a3.2 3.2 0 1 0 6.4 0a3.2 3.2 0 1 0 -6.4 0Z M756.5 329.3a3.2 3.2 0 1 0 6.4 0a3.2 3.2 0 1 0 -6.4 0Z M756.6 318.0a3.2 3.2 0 1 0 6.4 0a3.2 3.2 0 1 0 -6.4 0Z M754.9 305.8a3.2 3.2 0 1 0 6.4 0a3.2 3.2 0 1 0 -6.4 0Z M751.5 292.9a3.2 3.2 0 1 0 6.4 0a3.2 3.2 0 1 0 -6.4 0Z M746.5 279.5a3.2 3.2 0 1 0 6.4 0a3.2 3.2 0 1 0 -6.4 0Z M739.7 265.7a3.2 3.2 0 1 0 6.4 0a3.2 3.2 0 1 0 -6.4 0Z M731.3 251.7a3.2 3.2 0 1 0 6.4 0a3.2 3.2 0 1 0 -6.4 0Z M721.3 237.6a3.2 3.2 0 1 0 6.4 0a3.2 3.2 0 1 0 -6.4 0Z M709.9 223.7a3.2 3.2 0 1 0 6.4 0a3.2 3.2 0 1 0 -6.4 0Z M697.2 210.1a3.2 3.2 0 1 0 6.4 0a3.2 3.2 0 1 0 -6.4 0Z M683.4 197.1a3.2 3.2 0 1 0 6.4 0a3.2 3.2 0 1 0 -6.4 0Z M668.6 184.8a3.2 3.2 0 1 0 6.4 0a3.2 3.2 0 1 0 -6.4 0Z M653.1 173.5a3.2 3.2 0 1 0 6.4 0a3.2 3.2 0 1 0 -6.4 0Z M637.1 163.1a3.2 3.2 0 1 0 6.4 0a3.2 3.2 0 1 0 -6.4 0Z M620.7 154.0a3.2 3.2 0 1 0 6.4 0a3.2 3.2 0 1 0 -6.4 0Z M604.3 146.2a3.2 3.2 0 1 0 6.4 0a3.2 3.2 0 1 0 -6.4 0Z M588.1 139.8a3.2 3.2 0 1 0 6.4 0a3.2 3.2 0 1 0 -6.4 0Z M572.2 134.9a3.2 3.2 0 1 0 6.4 0a3.2 3.2 0 1 0 -6.4 0Z M556.9 131.5a3.2 3.2 0 1 0 6.4 0a3.2 3.2 0 1 0 -6.4 0Z M542.4 129.7a3.2 3.2 0 1 0 6.4 0a3.2 3.2 0 1 0 -6.4 0Z M528.8 129.3a3.2 3.2 0 1 0 6.4 0a3.2 3.2 0 1 0 -6.4 0Z M516.3 130.5a3.2 3.2 0 1 0 6.4 0a3.2 3.2 0 1 0 -6.4 0Z M505.0 133.0a3.2 3.2 0 1 0 6.4 0a3.2 3.2 0 1 0 -6.4 0Z M495.1 137.0a3.2 3.2 0 1 0 6.4 0a3.2 3.2 0 1 0 -6.4 0Z M486.5 142.2a3.2 3.2 0 1 0 6.4 0a3.2 3.2 0 1 0 -6.4 0Z M479.4 148.6a3.2 3.2 0 1 0 6.4 0a3.2 3.2 0 1 0 -6.4 0Z M473.7 156.0a3.2 3.2 0 1 0 6.4 0a3.2 3.2 0 1 0 -6.4 0Z M469.6 164.4a3.2 3.2 0 1 0 6.4 0a3.2 3.2 0 1 0 -6.4 0Z M466.9 173.6a3.2 3.2 0 1 0 6.4 0a3.2 3.2 0 1 0 -6.4 0Z M465.7 183.4a3.2 3.2 0 1 0 6.4 0a3.2 3.2 0 1 0 -6.4 0Z" fill="none" stroke="#f00" stroke-width="1.3" stroke-linejoin="round"/></g>
</svg>
</body></html>
